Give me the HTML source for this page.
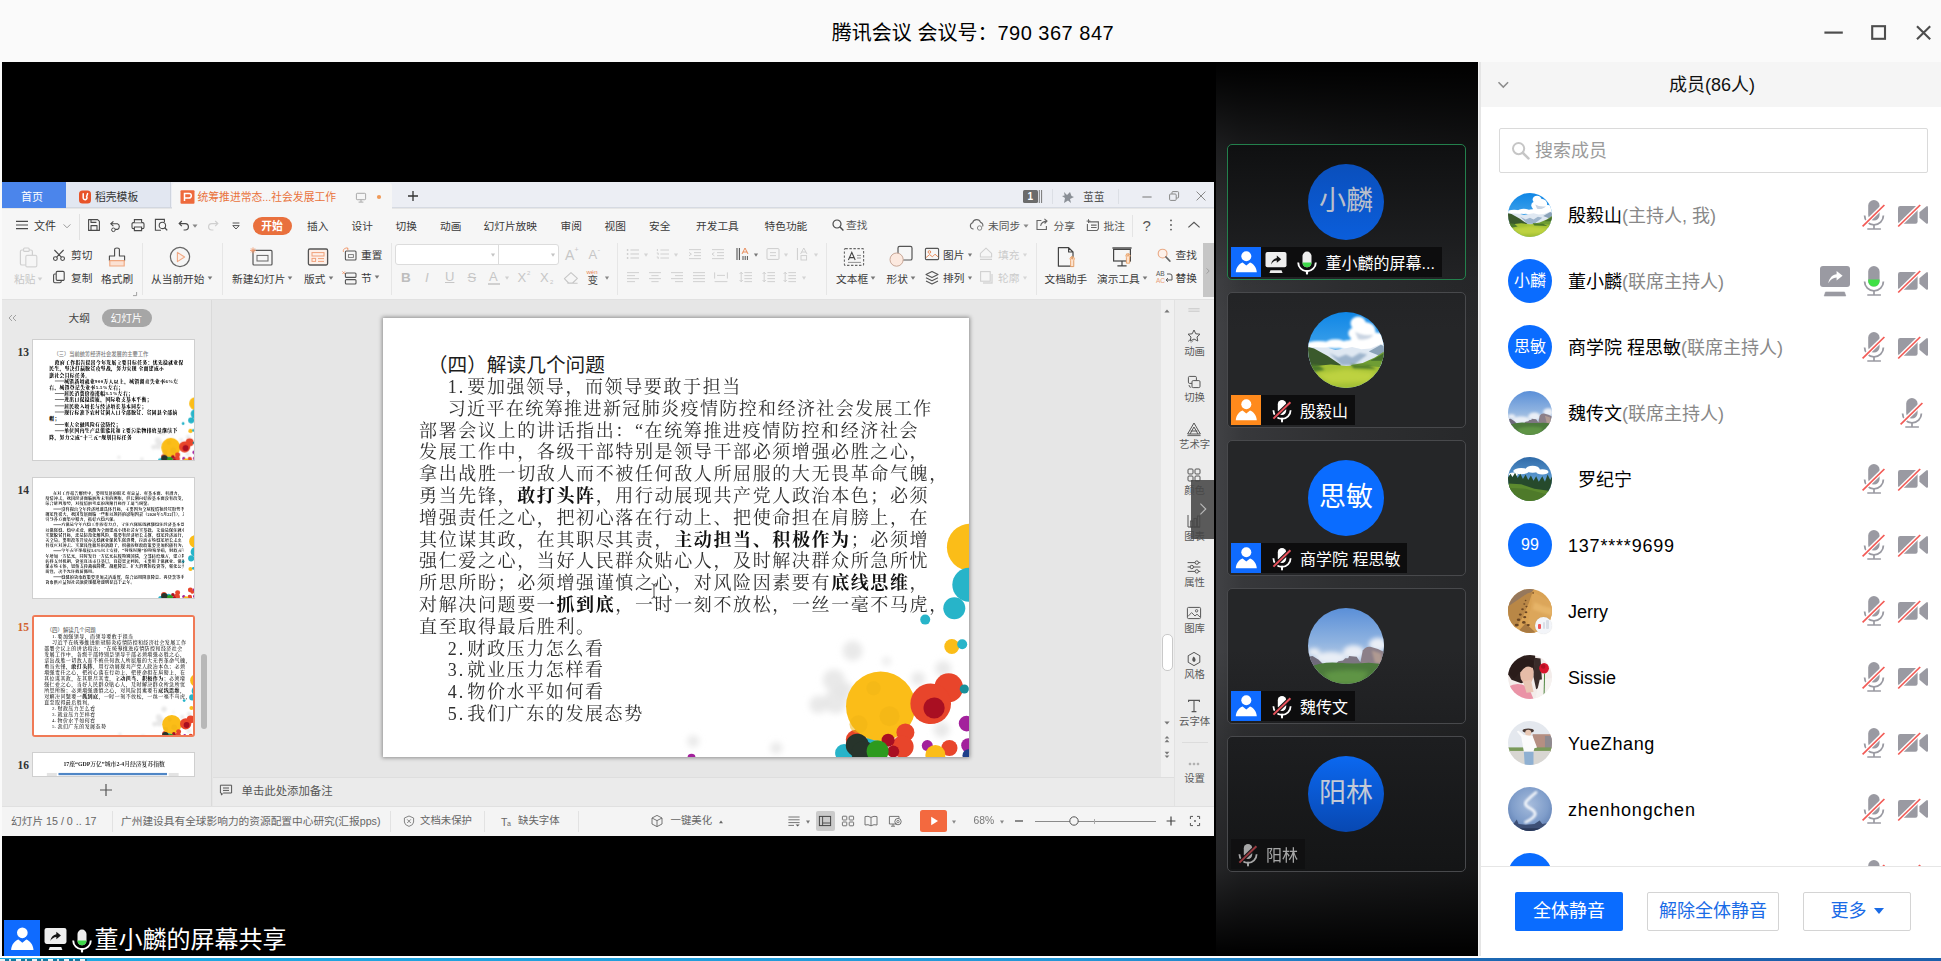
<!DOCTYPE html>
<html lang="zh-CN">
<head>
<meta charset="utf-8">
<title>腾讯会议</title>
<style>
html,body{margin:0;padding:0}
body{width:1941px;height:961px;overflow:hidden;position:relative;background:#fafafa;font-family:"Liberation Sans","Noto Sans CJK SC",sans-serif;color:#000}
div,span,svg{box-sizing:border-box}
.a{position:absolute}
svg{display:block;overflow:visible}
/* ---------- title bar ---------- */
#titlebar{left:0;top:0;width:1941px;height:62px;background:#fafafa}
#title{left:0;top:18px;width:1946px;text-align:center;font-size:20px;line-height:30px;color:#000;white-space:pre}
/* ---------- stage ---------- */
#stage{left:2px;top:62px;width:1476px;height:894px;background:#000}
#bottomline{left:0;top:956px;width:1941px;height:2px;background:#fff}
#bottomblue{left:0;top:958px;width:1941px;height:3px;background:linear-gradient(90deg,#1daae3 0%,#2396d6 55%,#1b62ae 80%,#1b5fab 100%)}
/* ---------- WPS window ---------- */
#wps{left:2px;top:182px;width:1212px;height:654px;background:#e6e6e6;overflow:hidden;font-size:11px;color:#333}
#wpsin{left:0;top:0;width:1212px;height:654px}
/* ---------- video strip ---------- */
#strip{left:1216px;top:62px;width:262px;height:894px;background:linear-gradient(180deg,#000 0,rgba(0,0,0,.8) 40px,rgba(0,0,0,.57) 83px,rgba(0,0,0,.05) 218px,rgba(0,0,0,0) 268px,rgba(0,0,0,0) 588px,rgba(0,0,0,.22) 678px,rgba(0,0,0,.45) 808px,rgba(0,0,0,.85) 870px,#000 894px),linear-gradient(90deg,#414245 0,#37383b 10%,#2e2f31 50%,#27282a 100%)}
/* ---------- member panel ---------- */
#panel{left:1478px;top:62px;width:463px;height:894px;background:#fff}
#slabel{left:2px;top:858px;width:300px;height:36px}
#slabeltxt{left:90.5px;top:0;font-size:24px;line-height:40px;color:#fff;white-space:nowrap}
#bl2{left:0;top:958.5px;width:87px;height:2.5px;background:repeating-linear-gradient(90deg,#e8f4fa 0,#e8f4fa 5px,#14789e 5px,#14789e 9px,#cfe6f0 9px,#cfe6f0 11px,#14789e 11px,#14789e 16px)}
/* ---------- window buttons ---------- */
#winbtn{left:1810px;top:12px}
/* ---------- panel ---------- */
#pborder{left:0;top:0;width:3px;height:894px;background:#e5e5e5;border-left:1px solid #f3f3f3}
#phead{left:3px;top:0;width:460px;height:45px;background:#f5f5f5}
#ptitle{left:0;top:0;width:462px;text-align:center;font-size:18px;line-height:46px;color:#111}
#psearch{left:21px;top:66px;width:429px;height:45px;border:1px solid #dadada;border-radius:2px;background:#fff}
#psph{left:35px;top:0;font-size:18px;line-height:44px;color:#9b9b9b;white-space:nowrap}
#plist{left:3px;top:112px;width:460px;height:692px;overflow:hidden}
.row{left:-3px;width:463px;height:66px}
.av{left:30px;top:11px;width:44px;height:44px;border-radius:50%;overflow:hidden;color:#fff;font-size:16px;line-height:43px;text-align:center;white-space:nowrap}
.av-blue{background:#0a6cff}
.nm{left:90px;top:0;font-size:18px;line-height:68px;color:#000;white-space:nowrap}
.rl{color:#888}
#pfoot{left:3px;top:804px;width:460px;height:90px;background:#fff;border-top:1px solid #e6e6e6}
.btn{top:25px;height:39px;font-size:18px;line-height:37px;text-align:center;border-radius:2px;white-space:nowrap}
.b1{left:34px;width:108px;background:#0a6cff;color:#fff;line-height:39px}
.b2{left:166px;width:132px;border:1px solid #d4d4d4;color:#1a6be6;background:#fff}
.b3{left:322px;width:108px;border:1px solid #d4d4d4;color:#1a6be6;background:#fff}
.tri{display:inline-block;width:0;height:0;border-left:5px solid transparent;border-right:5px solid transparent;border-top:6px solid #1a6be6;margin-left:7px;vertical-align:3px}
/* ---------- strip tiles ---------- */
.tile{left:10.5px;width:239px;height:136px;border:1px solid #48494c;border-radius:5px;background:#222325}
.tile.act{border-color:#23804c}
.tav{left:80.5px;top:19px;width:76px;height:76px;border-radius:50%;overflow:hidden;font-size:27px;line-height:75px;text-align:center;color:#fff;white-space:nowrap}
.t-blue{background:#0a6cff}
.t-blue-d{background:linear-gradient(180deg,#0a4fbc,#0b5edb);color:#b9bfcb}
.t-blue-m{background:linear-gradient(180deg,#0b68f0,#0848b2);color:#c3c9d6}
.lab{left:3px;top:102px;height:30px;background:#0d0d0e;display:flex;align-items:center;padding-right:7px;white-space:nowrap}
.lab .ub{display:block;width:30px;height:30px;flex:none}
.ub-blue{background:#0f6bff}
.ub-orange{background:#ff8a1c}
.lab .li{flex:none;position:relative;top:1px}
.ln{font-size:16px;line-height:30px;color:#fff;position:relative;top:1.6px}
.lab.dim{opacity:.62}
.sig{left:57px;top:38.5px;width:17px;height:17px;border-radius:50%;background:#f3f5f9;box-shadow:0 0 1px rgba(0,0,0,.15)}
.sig i{position:absolute;bottom:4.8px;background:#d9dee7;border-radius:1px}
.sig i:nth-child(1){left:2.6px;width:3.4px}.sig i:nth-child(2){left:7.6px;width:2.6px}.sig i:nth-child(3){left:11.2px;width:2.8px}

/* ---------- WPS ---------- */
#wps .t{line-height:16px;white-space:nowrap}
.slide{background:#fff;overflow:hidden;color:#303030;font-family:"Liberation Serif","Noto Serif CJK SC",serif;font-size:18px}
#mainslide{box-shadow:0 0 4px 1px rgba(0,0,0,.38)}
.sl{white-space:nowrap;letter-spacing:1.62px}
.sl b{font-weight:700;color:#111}
.sl.tight{letter-spacing:1.4px}
.stitle{font-family:"Liberation Sans","Noto Sans CJK SC",sans-serif;font-size:19.7px;line-height:26px;color:#1c1c1c;white-space:nowrap}
.nu{display:inline-block;width:19.6px;letter-spacing:2px}
.dash{display:inline-block;width:2em;height:0;border-top:0.09em solid #111;vertical-align:0.32em}
.th{overflow:hidden;background:#fff}
.th .sl{font-weight:900;color:#000}
.th.t15 .sl{font-weight:500;color:#111}
.th.t15 .sl b{font-weight:900}
.th.t14 .sl{letter-spacing:.7px}
.th .dash{border-top-width:0.16em}
.th .stitle{font-weight:500}
.th.t15 .stitle{font-weight:400;color:#444}
.tno{font:bold 11.5px/14px "Liberation Serif","DejaVu Serif",serif}

</style>
</head>
<body>
<svg width="0" height="0" style="position:absolute">
<defs>
<linearGradient id="g-sky1" x1="0" y1="0" x2="0" y2="1"><stop offset="0" stop-color="#0f86e6"/><stop offset="0.5" stop-color="#3fa2ea"/><stop offset="1" stop-color="#9fd0f2"/></linearGradient>
<linearGradient id="g-sky2" x1="0" y1="0" x2="0" y2="1"><stop offset="0" stop-color="#5a8fd8"/><stop offset="0.45" stop-color="#8fb3e0"/><stop offset="0.75" stop-color="#c3d2e6"/></linearGradient>
<linearGradient id="g-sky3" x1="0" y1="0" x2="0" y2="1"><stop offset="0" stop-color="#2f6aa8"/><stop offset="0.5" stop-color="#5d9bd2"/></linearGradient>
<linearGradient id="g-sand" x1="0" y1="0" x2="1" y2="1"><stop offset="0" stop-color="#b98449"/><stop offset="0.5" stop-color="#dba35c"/><stop offset="1" stop-color="#8a5a2c"/></linearGradient>
<radialGradient id="g-night" cx="0.5" cy="0.4" r="0.75"><stop offset="0" stop-color="#a6bcdc"/><stop offset="0.55" stop-color="#7f9dca"/><stop offset="1" stop-color="#4f6fa6"/></radialGradient>
<filter id="f-b1" x="-20%" y="-20%" width="140%" height="140%"><feGaussianBlur stdDeviation="1.6"/></filter>
<filter id="f-b2" x="-20%" y="-20%" width="140%" height="140%"><feGaussianBlur stdDeviation="3"/></filter>
</defs>
</svg>

<div id="titlebar" class="a">
  <div id="title" class="a">腾讯会议 会议号：<span style="letter-spacing:.5px">790 367 847</span></div>
<svg class="a" id="winbtn" width="131" height="40" viewBox="0 0 131 40"><path d="M14.4 20.6 H32.8" stroke="#4d4d4d" stroke-width="2.2"/><rect x="62.2" y="14.2" width="12.8" height="12.6" fill="none" stroke="#4d4d4d" stroke-width="2.1"/><path d="M107 14.2 L120.2 27.2 M120.2 14.2 L107 27.2" stroke="#4d4d4d" stroke-width="2.1"/></svg>

</div>
<div id="stage" class="a">
  <div class="a" id="slabel">
    <span class="a" style="left:0;top:0;width:36px;height:36px;background:#0f6bff"><svg class="a" style="left:2px;top:2.5px" width="32" height="32" viewBox="0 0 30 30"><circle cx="15.3" cy="9.2" r="5" fill="#fff"/><path d="M4.8 25.2 C5.2 20 8.2 16.6 11.6 15.4 L15.3 18.4 L19 15.4 C22.4 16.6 25.4 20 25.8 25.2 Z" fill="#fff"/></svg></span>
    <svg class="a" style="left:39.5px;top:8px" width="23" height="23" viewBox="0 0 22 22"><rect x="0.5" y="0" width="21" height="15.2" rx="2" fill="#eee"/><path d="M5.5 18.2 H16.5 L17.6 21 H4.4 Z" fill="#eee"/><path d="M6 12.4 C6.8 8.6 9 6.4 11.8 6 V3.6 L16.2 7.2 L11.8 10.8 V8.6 C9.4 8.8 7.6 10 6 12.4 Z" fill="#151515"/></svg>
    <svg class="a" style="left:65.5px;top:8px" width="24" height="26" viewBox="0 0 24 26"><rect x="7.5" y="1.6" width="9" height="15.6" rx="4.5" fill="#eee"/><path d="M7.5 12.6 H16.5 V12.7 A4.5 4.5 0 0 1 7.5 12.7 Z" fill="#3fd84a"/><path d="M3.2 12.4 A8.8 8.8 0 0 0 20.8 12.4" fill="none" stroke="#fff" stroke-width="1.9"/><path d="M12 21 V23.6" stroke="#fff" stroke-width="2.2" stroke-linecap="round"/></svg>
    <span class="a" id="slabeltxt">董小麟的屏幕共享</span>
  </div>
</div>
<div id="wps" class="a"><div id="wpsin" class="a">
<div class="a " style="left:0px;top:0px;width:1212px;height:26px;background:#eceef4;border-bottom:1px solid #d6dae2"></div>
<div class="a " style="left:0px;top:0px;width:64px;height:26px;background:#4b85eb"></div>
<div class="a t " style="left:19px;top:6.5px;font-size:11px;color:#fff;">首页</div>
<div class="a " style="left:64px;top:0px;width:105px;height:26px;background:#e2e7f1;border-right:1px solid #cfd4de;border-bottom:1px solid #d2d7e0"></div>
<svg class="a" style="left:76.0px;top:7.5px;" width="14" height="14" viewBox="-7.0 -7.0 14 14"><rect x="-6" y="-6.5" width="12" height="13" rx="3.5" fill="#e8542a"/><path d="M-1.8 -3.2 V1 A1.9 1.9 0 1 0 1.6 -0.4 L2.6 -3.4" fill="none" stroke="#fff" stroke-width="1.5" stroke-linecap="round"/></svg>
<div class="a t " style="left:93px;top:7.0px;font-size:10.8px;color:#333;">稻壳模板</div>
<div class="a " style="left:170px;top:1px;width:220px;height:26px;background:#f6f6f6;border-radius:3px 3px 0 0"></div>
<svg class="a" style="left:177.5px;top:7.7px;" width="15" height="14" viewBox="-7.5 -7.0 15 14"><rect x="-7" y="-6.8" width="14" height="13.6" rx="1" fill="#ee6a3c"/><path d="M-3 4 V-3.4 H1.6 A2 2 0 0 1 1.6 1 H-3" fill="none" stroke="#fff" stroke-width="1.5"/></svg>
<div class="a t " style="left:195.5px;top:7.0px;font-size:10.8px;color:#e9733c;">统筹推进常态...社会发展工作</div>
<svg class="a" style="left:352.5px;top:9.5px;" width="12" height="11" viewBox="-6.0 -5.5 12 11"><rect x="-4.6" y="-4.2" width="9.2" height="6.4" rx="0.8" fill="none" stroke="#a9a9a9" stroke-width="1"/><path d="M0 2.2 V4.4 M-2.4 4.6 H2.4" stroke="#a9a9a9" stroke-width="1"/></svg>
<svg class="a" style="left:374.0px;top:11.8px;" width="6" height="6" viewBox="-3.0 -3.0 6 6"><circle r="2.1" fill="#f09a58"/></svg>
<svg class="a" style="left:405.3px;top:8.3px;" width="12" height="12" viewBox="-6.0 -6.0 12 12"><path d="M-5 0 H5 M0 -5 V5" stroke="#333" stroke-width="1.3"/></svg>
<div class="a " style="left:1021px;top:7.7px;width:14.5px;height:13.1px;background:#6b6b6b;border-radius:1.5px;color:#fff;font-size:10px;line-height:13px;text-align:center;font-weight:bold">1</div>
<svg class="a" style="left:1036px;top:7.7px;" width="6" height="14"><path d="M1.3 0 V13 M3.6 0 V13" stroke="#777" stroke-width="1"/></svg>
<div class="a " style="left:1049.5px;top:7px;width:1.0px;height:15px;background:#dcdfe5"></div>
<svg class="a" style="left:1058.5px;top:7.5px;" width="14" height="14" viewBox="-7.0 -7.0 14 14"><path d="M-4 -5 L-1 -2 L2 -5 L3.5 -1 L6 0 L2 2 L3 6 L0 3.6 L-4 6 L-3 1 L-6 -1 L-3.4 -1.6 Z" fill="#8a8f96"/></svg>
<div class="a t " style="left:1081px;top:7.0px;font-size:10.8px;color:#555;">茧茧</div>
<div class="a " style="left:1116px;top:7px;width:1px;height:15px;background:#dcdfe5"></div>
<svg class="a" style="left:1139.0px;top:13.0px;" width="12" height="4" viewBox="-6.0 -2.0 12 4"><path d="M-4.6 0 H4.6" stroke="#777" stroke-width="1"/></svg>
<svg class="a" style="left:1166.0px;top:7.5px;" width="12" height="12" viewBox="-6.0 -6.0 12 12"><rect x="-4.4" y="-2" width="6.6" height="6.4" rx="1" fill="none" stroke="#888" stroke-width="1"/><path d="M-2 -2.2 V-3.6 Q-2 -4.4 -1 -4.4 H3.6 Q4.6 -4.4 4.6 -3.4 V1 Q4.6 2 3.6 2 H2.4" fill="none" stroke="#888" stroke-width="1"/></svg>
<svg class="a" style="left:1193.0px;top:7.5px;" width="12" height="12" viewBox="-6.0 -6.0 12 12"><path d="M-4.4 -4.4 L4.4 4.4 M4.4 -4.4 L-4.4 4.4" stroke="#888" stroke-width="1"/></svg>
<div class="a " style="left:0px;top:27px;width:1212px;height:89.5px;background:#f6f6f6"></div>
<div class="a " style="left:0px;top:116.5px;width:1212px;height:2.5px;background:linear-gradient(180deg,#dedede,#ebebeb)"></div>
<svg class="a" style="left:13.3px;top:37.0px;" width="14" height="12" viewBox="-7.0 -6.0 14 12"><path d="M-6 -3.6 H6 M-6 0 H6 M-6 3.6 H6" stroke="#4a4a4a" stroke-width="1.1"/></svg>
<div class="a t " style="left:32px;top:35.5px;font-size:11px;color:#333;">文件</div>
<svg class="a" style="left:59.5px;top:40.0px;" width="10" height="8" viewBox="-5.0 -4.0 10 8"><path d="M-3.4 -1.6 L0 1.8 L3.4 -1.6" fill="none" stroke="#999" stroke-width="1"/></svg>
<div class="a " style="left:76.5px;top:32px;width:1.0px;height:26px;background:#e1e1e1"></div>
<svg class="a" style="left:85.0px;top:36.0px;" width="14" height="14" viewBox="-7.0 -7.0 14 14"><path d="M-5.4 -5.4 H3.6 L5.4 -3.6 V5.4 H-5.4 Z M-3 5 V0.6 H3 V5 M-3 -5.2 V-2.6 H2.4" fill="none" stroke="#4a4a4a" stroke-width="1.1" stroke-linejoin="round"/></svg>
<svg class="a" style="left:106.0px;top:36.5px;" width="16" height="14" viewBox="-8.0 -7.0 16 14"><path d="M-5 -2.2 H1.4 A3 3 0 0 1 1.4 3.4 H-1 M-2.6 -4.6 L-5.2 -2.2 L-2.6 0.2" fill="none" stroke="#4a4a4a" stroke-width="1.1"/><circle cx="-2.6" cy="3.8" r="1.8" fill="none" stroke="#4a4a4a" stroke-width="1"/></svg>
<svg class="a" style="left:128.0px;top:36.0px;" width="16" height="14" viewBox="-8.0 -7.0 16 14"><rect x="-6" y="-2.4" width="12" height="6" rx="1.4" fill="none" stroke="#4a4a4a" stroke-width="1.1"/><path d="M-3.6 -2.6 V-5.4 H3.6 V-2.6 M-3.6 2 H3.6 V5.6 H-3.6 Z" fill="#f6f6f6" stroke="#4a4a4a" stroke-width="1.1"/></svg>
<svg class="a" style="left:150.5px;top:36.0px;" width="16" height="14" viewBox="-8.0 -7.0 16 14"><path d="M0 5.2 H-5.6 V-5.6 H3.4 V-3" fill="none" stroke="#4a4a4a" stroke-width="1.1"/><circle cx="1.4" cy="0.4" r="3.2" fill="none" stroke="#4a4a4a" stroke-width="1.1"/><path d="M3.8 2.8 L6.2 5.4" stroke="#4a4a4a" stroke-width="1.3"/></svg>
<svg class="a" style="left:174.5px;top:37.3px;" width="14" height="12" viewBox="-7.0 -6.0 14 12"><path d="M-4.6 -1.4 H1.2 A3.2 3.2 0 0 1 1.2 5 H-0.4 M-2.2 -4 L-4.8 -1.4 L-2.2 1.2" fill="none" stroke="#4a4a4a" stroke-width="1.2"/></svg>
<svg class="a" style="left:189.0px;top:41.0px;" width="8" height="6" viewBox="-4.0 -3.0 8 6"><path d="M-2.5 -1.4 L2.5 -1.4 L0 1.7 Z" fill="#888"/></svg>
<svg class="a" style="left:203.5px;top:37.3px;" width="14" height="12" viewBox="-7.0 -6.0 14 12"><path d="M4.6 -1.4 H-1.2 A3.2 3.2 0 0 0 -1.2 5 H0.4 M2.2 -4 L4.8 -1.4 L2.2 1.2" fill="none" stroke="#cfcfcf" stroke-width="1.2"/></svg>
<svg class="a" style="left:228.5px;top:38.5px;" width="10" height="10" viewBox="-5.0 -5.0 10 10"><path d="M-3.4 -3 H3.4" stroke="#555" stroke-width="1"/><path d="M-3.2 -0.4 L0 3 L3.2 -0.4 Z" fill="none" stroke="#555" stroke-width="1"/></svg>
<div class="a " style="left:250.5px;top:34.5px;width:39.0px;height:18.0px;background:#e9703d;border-radius:9px;color:#fff;font-size:10.8px;line-height:18px;text-align:center;font-weight:bold">开始</div>
<div class="a t " style="left:305px;top:35.5px;font-size:10.7px;color:#3a3a3a;">插入</div>
<div class="a t " style="left:349.5px;top:35.5px;font-size:10.7px;color:#3a3a3a;">设计</div>
<div class="a t " style="left:393.5px;top:35.5px;font-size:10.7px;color:#3a3a3a;">切换</div>
<div class="a t " style="left:438px;top:35.5px;font-size:10.7px;color:#3a3a3a;">动画</div>
<div class="a t " style="left:481.5px;top:35.5px;font-size:10.7px;color:#3a3a3a;">幻灯片放映</div>
<div class="a t " style="left:558.5px;top:35.5px;font-size:10.7px;color:#3a3a3a;">审阅</div>
<div class="a t " style="left:602.5px;top:35.5px;font-size:10.7px;color:#3a3a3a;">视图</div>
<div class="a t " style="left:647px;top:35.5px;font-size:10.7px;color:#3a3a3a;">安全</div>
<div class="a t " style="left:694px;top:35.5px;font-size:10.7px;color:#3a3a3a;">开发工具</div>
<div class="a t " style="left:762.5px;top:35.5px;font-size:10.7px;color:#3a3a3a;">特色功能</div>
<svg class="a" style="left:829.0px;top:36.0px;" width="14" height="14" viewBox="-7.0 -7.0 14 14"><circle cx="-1" cy="-1" r="4" fill="none" stroke="#4a4a4a" stroke-width="1.2"/><path d="M2 2 L5.4 5.6" stroke="#4a4a4a" stroke-width="1.4"/></svg>
<div class="a t " style="left:844px;top:35.0px;font-size:10.7px;color:#555;">查找</div>
<svg class="a" style="left:967.0px;top:37.0px;" width="16" height="12" viewBox="-8.0 -6.0 16 12"><path d="M-3.4 4 H-4 A3.2 3.2 0 0 1 -4.4 -2.2 A4.2 4.2 0 0 1 3.6 -2.6 A3 3 0 0 1 5.6 1.6" fill="none" stroke="#666" stroke-width="1.1"/><circle cx="2.6" cy="3" r="2.2" fill="none" stroke="#888" stroke-width="1"/></svg>
<div class="a t " style="left:986px;top:35.5px;font-size:10.7px;color:#555;">未同步</div>
<svg class="a" style="left:1019.5px;top:41.0px;" width="8" height="6" viewBox="-4.0 -3.0 8 6"><path d="M-2.5 -1.4 L2.5 -1.4 L0 1.7 Z" fill="#888"/></svg>
<svg class="a" style="left:1033.0px;top:36.0px;" width="14" height="13" viewBox="-7.0 -6.5 14 13"><path d="M-0.6 -4 H-5 V5 H4.4 V1.6" fill="none" stroke="#666" stroke-width="1.1"/><path d="M-1.4 1.4 Q-0.6 -3 4.8 -3.4 M2.4 -5.6 L5 -3.4 L2.6 -1" fill="none" stroke="#666" stroke-width="1.1"/></svg>
<div class="a t " style="left:1051.5px;top:35.5px;font-size:10.7px;color:#555;">分享</div>
<svg class="a" style="left:1083.0px;top:36.5px;" width="16" height="13" viewBox="-8.0 -6.5 16 13"><path d="M-4 -3.6 H5.4 V3.4 L4 5 H-5.6 V-1.6 M-2 -0.4 H3.6 M-2 2 H3.6" fill="none" stroke="#666" stroke-width="1.1"/><path d="M-6.4 -4.4 H-2.6 M-4.5 -6.3 V-2.5" stroke="#666" stroke-width="1"/></svg>
<div class="a t " style="left:1101.5px;top:35.5px;font-size:10.7px;color:#555;">批注</div>
<div class="a " style="left:1129.5px;top:33px;width:1.0px;height:22px;background:#e4e4e4"></div>
<div class="a t " style="left:1140.5px;top:35.5px;font-size:15px;color:#555;font-family:'Liberation Sans',sans-serif">?</div>
<svg class="a" style="left:1167.0px;top:36.0px;" width="4" height="14" viewBox="-2.0 -7.0 4 14"><circle cy="-4.6" r="0.9" fill="#555"/><circle cy="0" r="0.9" fill="#555"/><circle cy="4.6" r="0.9" fill="#555"/></svg>
<svg class="a" style="left:1185.0px;top:39.0px;" width="14" height="8" viewBox="-7.0 -4.0 14 8"><path d="M-5.6 2.4 L0 -2.8 L5.6 2.4" fill="none" stroke="#555" stroke-width="1.2"/></svg>
<svg class="a" style="left:14.5px;top:63.8px;" width="22" height="22" viewBox="-11.0 -11.0 22 22"><rect x="-7.6" y="-7" width="12" height="15" rx="1.6" fill="none" stroke="#cfcfcf" stroke-width="1.2"/><rect x="-4.4" y="-9" width="5.6" height="3.4" rx="1" fill="#f6f6f6" stroke="#cfcfcf" stroke-width="1.1"/><rect x="-2.2" y="-1.6" width="11" height="11.4" rx="1.4" fill="#f6f6f6" stroke="#d4d4d4" stroke-width="1.2"/></svg>
<div class="a t " style="left:12px;top:88.5px;font-size:10.7px;color:#c6c6c6;">粘贴</div>
<svg class="a" style="left:33.8px;top:94.0px;" width="8" height="6" viewBox="-4.0 -3.0 8 6"><path d="M-2.3 -1.4 L2.3 -1.4 L0 1.7 Z" fill="#cfcfcf"/></svg>
<svg class="a" style="left:50.0px;top:65.7px;" width="14" height="14" viewBox="-7.0 -7.0 14 14"><path d="M-4.6 -5 L2.4 2.2 M4.6 -5 L-2.4 2.2" stroke="#4a4a4a" stroke-width="1.1"/><circle cx="-3.6" cy="3.6" r="1.9" fill="none" stroke="#4a4a4a" stroke-width="1.1"/><circle cx="3.6" cy="3.6" r="1.9" fill="none" stroke="#4a4a4a" stroke-width="1.1"/></svg>
<div class="a t " style="left:69px;top:64.7px;font-size:10.7px;color:#3a3a3a;">剪切</div>
<svg class="a" style="left:50.0px;top:88.3px;" width="14" height="14" viewBox="-7.0 -7.0 14 14"><rect x="-2.8" y="-5.6" width="8" height="9" rx="1.2" fill="none" stroke="#4a4a4a" stroke-width="1.1"/><path d="M-3.2 -3 H-4.2 Q-5.4 -3 -5.4 -1.8 V4.6 Q-5.4 5.8 -4.2 5.8 H1 Q2.2 5.8 2.2 4.6 V3.8" fill="none" stroke="#4a4a4a" stroke-width="1.1"/></svg>
<div class="a t " style="left:69px;top:87.5px;font-size:10.7px;color:#3a3a3a;">复制</div>
<svg class="a" style="left:103.7px;top:63.6px;" width="22" height="22" viewBox="-11.0 -11.0 22 22"><path d="M-2.4 -1 V-7.4 Q-2.4 -9 0 -9 Q2.4 -9 2.4 -7.4 V-1 H7.6 V3.6 H-7.6 V-1 Z" fill="#f6f6f6" stroke="#4a4a4a" stroke-width="1.1" stroke-linejoin="round"/><path d="M-7.2 3.6 H7.2 V9 H-7.2 Z" fill="#fbe1d3" stroke="#f0a77f" stroke-width="1.1"/></svg>
<div class="a t " style="left:99px;top:89.0px;font-size:10.7px;color:#3a3a3a;">格式刷</div>
<svg class="a" style="left:130.0px;top:108.5px;" width="6" height="6" viewBox="-3.0 -3.0 6 6"><path d="M-2 1.6 H1.6 V-2" fill="none" stroke="#999" stroke-width="0.9"/></svg>
<div class="a " style="left:139.5px;top:61px;width:1.0px;height:52px;background:#e6e6e6"></div>
<svg class="a" style="left:166.0px;top:63.0px;" width="24" height="24" viewBox="-12.0 -12.0 24 24"><circle r="9.6" fill="none" stroke="#666" stroke-width="1.2"/><path d="M-2.6 -4.6 L4.6 0 L-2.6 4.6 Z" fill="#fdeee6" stroke="#f0a985" stroke-width="1.1" stroke-linejoin="round"/></svg>
<div class="a t " style="left:149px;top:89.0px;font-size:10.7px;color:#3a3a3a;">从当前开始</div>
<svg class="a" style="left:203.5px;top:93.0px;" width="8" height="6" viewBox="-4.0 -3.0 8 6"><path d="M-2.3 -1.4 L2.3 -1.4 L0 1.7 Z" fill="#777"/></svg>
<div class="a " style="left:220px;top:61px;width:1px;height:52px;background:#e6e6e6"></div>
<svg class="a" style="left:247.0px;top:64.0px;" width="26" height="22" viewBox="-13.0 -11.0 26 22"><rect x="-9" y="-6.6" width="19" height="14.6" rx="1" fill="none" stroke="#555" stroke-width="1.2"/><rect x="-5" y="-1.6" width="11" height="5.6" fill="none" stroke="#666" stroke-width="1"/><path d="M-9 -9.6 V-3.6 M-12 -6.6 H-6 M-11 -8.6 L-7 -4.6 M-7 -8.6 L-11 -4.6" stroke="#f09a6e" stroke-width="0.9"/></svg>
<div class="a t " style="left:230px;top:89.0px;font-size:10.7px;color:#3a3a3a;">新建幻灯片</div>
<svg class="a" style="left:284.0px;top:93.0px;" width="8" height="6" viewBox="-4.0 -3.0 8 6"><path d="M-2.3 -1.4 L2.3 -1.4 L0 1.7 Z" fill="#777"/></svg>
<svg class="a" style="left:303.5px;top:64.0px;" width="24" height="22" viewBox="-12.0 -11.0 24 22"><rect x="-9.6" y="-8" width="19.2" height="16" rx="1.4" fill="#fdf0e9" stroke="#555" stroke-width="1.3"/><rect x="-6" y="-4.4" width="12" height="3.4" fill="none" stroke="#f0a07a" stroke-width="1"/><rect x="-6" y="1.4" width="3.6" height="3" fill="none" stroke="#f0a07a" stroke-width="1"/><path d="M0 1.6 H6 M0 4.4 H6" stroke="#f0a07a" stroke-width="1"/></svg>
<div class="a t " style="left:302px;top:89.0px;font-size:10.7px;color:#3a3a3a;">版式</div>
<svg class="a" style="left:324.5px;top:93.0px;" width="8" height="6" viewBox="-4.0 -3.0 8 6"><path d="M-2.3 -1.4 L2.3 -1.4 L0 1.7 Z" fill="#777"/></svg>
<svg class="a" style="left:339.7px;top:65.5px;" width="16" height="14" viewBox="-8.0 -7.0 16 14"><rect x="-4.6" y="-4" width="10.6" height="9" rx="1" fill="none" stroke="#555" stroke-width="1.1"/><rect x="-1.6" y="-0.4" width="5" height="2.8" fill="none" stroke="#777" stroke-width="0.9"/><path d="M-6.6 -3 A3 3 0 0 1 -2 -6.4 M-3.2 -7.4 L-1.6 -6.2 L-3 -4.6" fill="none" stroke="#f09a6e" stroke-width="0.9"/></svg>
<div class="a t " style="left:359px;top:64.7px;font-size:10.7px;color:#3a3a3a;">重置</div>
<svg class="a" style="left:339.7px;top:88.5px;" width="16" height="14" viewBox="-8.0 -7.0 16 14"><rect x="-4.6" y="-5" width="10.6" height="4.4" rx="1" fill="none" stroke="#555" stroke-width="1.1"/><rect x="-4.6" y="1.6" width="10.6" height="4.4" rx="1" fill="none" stroke="#555" stroke-width="1.1"/><path d="M-7.6 -6.6 L-5 -4 M-5 -6.6 L-7.6 -4" stroke="#f09a6e" stroke-width="0.9"/></svg>
<div class="a t " style="left:359px;top:87.5px;font-size:10.7px;color:#3a3a3a;">节</div>
<svg class="a" style="left:371.0px;top:92.0px;" width="8" height="6" viewBox="-4.0 -3.0 8 6"><path d="M-2.3 -1.4 L2.3 -1.4 L0 1.7 Z" fill="#777"/></svg>
<div class="a " style="left:389px;top:61px;width:1px;height:52px;background:#e6e6e6"></div>
<div class="a " style="left:393px;top:62px;width:163.5px;height:20.5px;background:#fff;border:1px solid #dcdcdc;border-radius:3px"></div>
<div class="a " style="left:495.5px;top:62.5px;width:1.0px;height:19.5px;background:#dcdcdc"></div>
<svg class="a" style="left:486.5px;top:69.7px;" width="8" height="6" viewBox="-4.0 -3.0 8 6"><path d="M-2.1 -1.4 L2.1 -1.4 L0 1.7 Z" fill="#c4c4c4"/></svg>
<svg class="a" style="left:547.0px;top:69.7px;" width="8" height="6" viewBox="-4.0 -3.0 8 6"><path d="M-2.1 -1.4 L2.1 -1.4 L0 1.7 Z" fill="#c4c4c4"/></svg>
<div class="a t " style="left:563px;top:64.5px;font-size:14px;color:#c6c6c6;font-family:'Liberation Sans',sans-serif">A</div>
<div class="a t " style="left:572.5px;top:60.0px;font-size:7px;color:#c6c6c6;font-family:'Liberation Sans',sans-serif">+</div>
<div class="a t " style="left:586.5px;top:64.5px;font-size:13px;color:#c6c6c6;font-family:'Liberation Sans',sans-serif">A</div>
<div class="a t " style="left:595.5px;top:59.5px;font-size:8px;color:#c6c6c6;font-family:'Liberation Sans',sans-serif">-</div>
<div class="a t " style="left:399px;top:87.5px;font-size:13.5px;color:#bdbdbd;font-family:'Liberation Sans',sans-serif;font-weight:bold">B</div>
<div class="a t " style="left:423px;top:87.5px;font-size:13.5px;color:#c6c6c6;font-family:'Liberation Sans',sans-serif;font-style:italic">I</div>
<div class="a t " style="left:443px;top:87.2px;font-size:13px;color:#c6c6c6;font-family:'Liberation Sans',sans-serif;text-decoration:underline">U</div>
<div class="a t " style="left:465.5px;top:87.5px;font-size:13px;color:#c6c6c6;font-family:'Liberation Sans',sans-serif;text-decoration:line-through">S</div>
<div class="a t " style="left:487px;top:86.8px;font-size:13px;color:#c6c6c6;font-family:'Liberation Sans',sans-serif;">A</div>
<div class="a " style="left:485.5px;top:101.2px;width:12.0px;height:1.8px;background:#d0d0d0"></div>
<svg class="a" style="left:501.0px;top:93.0px;" width="8" height="6" viewBox="-4.0 -3.0 8 6"><path d="M-2.1 -1.4 L2.1 -1.4 L0 1.7 Z" fill="#d0d0d0"/></svg>
<div class="a t " style="left:515.5px;top:87.8px;font-size:13px;color:#c6c6c6;font-family:'Liberation Sans',sans-serif;">X</div>
<div class="a t " style="left:525px;top:83.0px;font-size:6px;color:#c6c6c6;font-family:'Liberation Sans',sans-serif;">2</div>
<div class="a t " style="left:538px;top:87.8px;font-size:13px;color:#c6c6c6;font-family:'Liberation Sans',sans-serif;">X</div>
<div class="a t " style="left:548px;top:92.0px;font-size:6px;color:#c6c6c6;font-family:'Liberation Sans',sans-serif;">2</div>
<svg class="a" style="left:561.0px;top:88.5px;" width="16" height="14" viewBox="-8.0 -7.0 16 14"><path d="M-6.6 0.6 L0 -5.4 L6.4 0.4 L1.6 5 H-2.4 Z M-3.6 5.2 H6.6" fill="none" stroke="#c6c6c6" stroke-width="1.1" stroke-linejoin="round"/></svg>
<div class="a t " style="left:585.5px;top:89.5px;font-size:10.5px;color:#4a4a4a;">变</div>
<div class="a t " style="left:584.5px;top:82.0px;font-size:6px;color:#e8834f;font-family:'Liberation Sans',sans-serif;">wén</div>
<svg class="a" style="left:600.5px;top:93.0px;" width="8" height="6" viewBox="-4.0 -3.0 8 6"><path d="M-2.1 -1.4 L2.1 -1.4 L0 1.7 Z" fill="#888"/></svg>
<div class="a " style="left:615px;top:61px;width:1px;height:52px;background:#e6e6e6"></div>
<svg class="a" style="left:622.5px;top:65.3px;" width="16" height="14" viewBox="-8.0 -7.0 16 14"><path d="M-2.6 -4 H6 M-2.6 0 H6 M-2.6 4 H6" stroke="#cdcdcd" stroke-width="1"/><circle cx="-5.4" cy="-4" r="0.9" fill="#cdcdcd"/><circle cx="-5.4" cy="0" r="0.9" fill="#cdcdcd"/><circle cx="-5.4" cy="4" r="0.9" fill="#cdcdcd"/></svg>
<svg class="a" style="left:652.5px;top:65.3px;" width="16" height="14" viewBox="-8.0 -7.0 16 14"><path d="M-2.6 -4 H6 M-2.6 0 H6 M-2.6 4 H6 M-5.6 -5 V-3 M-6.2 -1 H-4.8 V1 M-6.2 3 H-4.8 V5" stroke="#cdcdcd" stroke-width="0.9" fill="none"/></svg>
<svg class="a" style="left:685.0px;top:65.3px;" width="16" height="14" viewBox="-8.0 -7.0 16 14"><path d="M-6 -4.4 H6 M-1 -1.4 H6 M-1 1.6 H6 M-6 4.6 H6 M-6 -1.6 L-3.6 0.1 L-6 1.8" stroke="#cdcdcd" stroke-width="0.9" fill="none"/></svg>
<svg class="a" style="left:708.0px;top:65.3px;" width="16" height="14" viewBox="-8.0 -7.0 16 14"><path d="M-6 -4.4 H6 M-1 -1.4 H6 M-1 1.6 H6 M-6 4.6 H6 M-3.6 -1.6 L-6 0.1 L-3.6 1.8" stroke="#cdcdcd" stroke-width="0.9" fill="none"/></svg>
<svg class="a" style="left:732.5px;top:65.3px;" width="16" height="14" viewBox="-8.0 -7.0 16 14"><path d="M-6 -6 V6 M-3.6 -6 V6" stroke="#555" stroke-width="1.1"/><path d="M-1 0 L2 -6 L5 0 M-0.2 -2 H4.2" fill="none" stroke="#e8834f" stroke-width="0.9"/><path d="M0 2 V6 M2.2 2 V6 M4.4 2 V6" stroke="#555" stroke-width="1"/></svg>
<svg class="a" style="left:762.5px;top:65.3px;" width="16" height="14" viewBox="-8.0 -7.0 16 14"><rect x="-6" y="-5.4" width="12" height="10.8" rx="1" fill="none" stroke="#cdcdcd" stroke-width="1"/><path d="M-3 -1.4 H3 M-3 1.6 H3" stroke="#cdcdcd" stroke-width="0.9"/></svg>
<svg class="a" style="left:792.5px;top:65.3px;" width="16" height="14" viewBox="-8.0 -7.0 16 14"><path d="M-5.6 -6 V6" stroke="#cdcdcd" stroke-width="1"/><path d="M-2.4 0 L0.8 -6 L4 0 M-1.4 -2 H3" fill="none" stroke="#cdcdcd" stroke-width="0.9"/><rect x="-2" y="1.6" width="5.6" height="4.4" fill="none" stroke="#cdcdcd" stroke-width="0.9"/></svg>
<svg class="a" style="left:640.0px;top:70.0px;" width="8" height="6" viewBox="-4.0 -3.0 8 6"><path d="M-2.1 -1.4 L2.1 -1.4 L0 1.7 Z" fill="#d4d4d4"/></svg>
<svg class="a" style="left:670.0px;top:70.0px;" width="8" height="6" viewBox="-4.0 -3.0 8 6"><path d="M-2.1 -1.4 L2.1 -1.4 L0 1.7 Z" fill="#d4d4d4"/></svg>
<svg class="a" style="left:749.5px;top:70.0px;" width="8" height="6" viewBox="-4.0 -3.0 8 6"><path d="M-2.1 -1.4 L2.1 -1.4 L0 1.7 Z" fill="#777"/></svg>
<svg class="a" style="left:780.0px;top:70.0px;" width="8" height="6" viewBox="-4.0 -3.0 8 6"><path d="M-2.1 -1.4 L2.1 -1.4 L0 1.7 Z" fill="#d4d4d4"/></svg>
<svg class="a" style="left:810.0px;top:70.0px;" width="8" height="6" viewBox="-4.0 -3.0 8 6"><path d="M-2.1 -1.4 L2.1 -1.4 L0 1.7 Z" fill="#d4d4d4"/></svg>
<svg class="a" style="left:622.5px;top:88.3px;" width="16" height="14" viewBox="-8.0 -7.0 16 14"><path d="M-6 -4.4 H6 M-6 -1.4 H2 M-6 1.6 H6 M-6 4.6 H2" stroke="#cdcdcd" stroke-width="0.9"/></svg>
<svg class="a" style="left:645.0px;top:88.3px;" width="16" height="14" viewBox="-8.0 -7.0 16 14"><path d="M-6 -4.4 H6 M-3.6 -1.4 H3.6 M-6 1.6 H6 M-3.6 4.6 H3.6" stroke="#cdcdcd" stroke-width="0.9"/></svg>
<svg class="a" style="left:667.0px;top:88.3px;" width="16" height="14" viewBox="-8.0 -7.0 16 14"><path d="M-6 -4.4 H6 M-2 -1.4 H6 M-6 1.6 H6 M-2 4.6 H6" stroke="#cdcdcd" stroke-width="0.9"/></svg>
<svg class="a" style="left:689.0px;top:88.3px;" width="16" height="14" viewBox="-8.0 -7.0 16 14"><path d="M-6 -4.4 H6 M-6 -1.4 H6 M-6 1.6 H6 M-6 4.6 H6" stroke="#cdcdcd" stroke-width="0.9"/></svg>
<svg class="a" style="left:711.0px;top:88.3px;" width="16" height="14" viewBox="-8.0 -7.0 16 14"><path d="M-6.4 -4.6 V1.6 M6.4 -4.6 V1.6 M-4 -1.6 H4 M-6.4 4.6 H6.4" stroke="#cdcdcd" stroke-width="0.9"/></svg>
<svg class="a" style="left:736.0px;top:88.3px;" width="16" height="14" viewBox="-8.0 -7.0 16 14"><path d="M-1.6 -4.4 H6 M-1.6 -1.4 H6 M-1.6 1.6 H6 M-1.6 4.6 H6 M-4.8 -4.6 V4.6 M-6.4 -3 L-4.8 -4.8 L-3.2 -3 M-6.4 3 L-4.8 4.8 L-3.2 3" stroke="#cdcdcd" stroke-width="0.9" fill="none"/></svg>
<svg class="a" style="left:758.7px;top:88.3px;" width="16" height="14" viewBox="-8.0 -7.0 16 14"><path d="M-1.6 -4.4 H6 M-1.6 -1.4 H6 M-1.6 1.6 H6 M-1.6 4.6 H6 M-4.8 -4.6 V4.6 M-6.4 -3 L-4.8 -4.8 L-3.2 -3 M-6.4 3 L-4.8 4.8 L-3.2 3" stroke="#cdcdcd" stroke-width="0.9" fill="none"/></svg>
<svg class="a" style="left:780.0px;top:88.3px;" width="16" height="14" viewBox="-8.0 -7.0 16 14"><path d="M-1.6 -4.4 H6 M-1.6 -1.4 H6 M-1.6 1.6 H6 M-1.6 4.6 H6 M-4.8 -4.6 V4.6 M-6.4 -3 L-4.8 -4.8 L-3.2 -3 M-6.4 3 L-4.8 4.8 L-3.2 3" stroke="#cdcdcd" stroke-width="0.9" fill="none"/></svg>
<svg class="a" style="left:798.0px;top:93.0px;" width="8" height="6" viewBox="-4.0 -3.0 8 6"><path d="M-2.1 -1.4 L2.1 -1.4 L0 1.7 Z" fill="#d4d4d4"/></svg>
<div class="a " style="left:824px;top:61px;width:1px;height:52px;background:#e6e6e6"></div>
<svg class="a" style="left:840.3px;top:64.0px;" width="24" height="22" viewBox="-12.0 -11.0 24 22"><rect x="-9.6" y="-8.4" width="19.2" height="16.8" rx="1" fill="none" stroke="#666" stroke-width="1.1" stroke-dasharray="2.4 1.6"/><path d="M-5.6 3 L-2.2 -4.6 L1.2 3 M-4.4 0.6 H0" fill="none" stroke="#444" stroke-width="1.1"/><path d="M3 -1.6 H7 M3 1 H7 M-6 5.4 H7" stroke="#888" stroke-width="0.9"/></svg>
<div class="a t " style="left:834px;top:89.0px;font-size:10.7px;color:#3a3a3a;">文本框</div>
<svg class="a" style="left:867.0px;top:93.0px;" width="8" height="6" viewBox="-4.0 -3.0 8 6"><path d="M-2.3 -1.4 L2.3 -1.4 L0 1.7 Z" fill="#777"/></svg>
<svg class="a" style="left:886.0px;top:62.3px;" width="26" height="24" viewBox="-13.0 -12.0 26 24"><rect x="-3" y="-9.6" width="14" height="13.6" rx="1.6" fill="none" stroke="#555" stroke-width="1.2"/><circle cx="-4.4" cy="3.6" r="6.6" fill="#fce9df" stroke="#c9a898" stroke-width="1"/></svg>
<div class="a t " style="left:884.5px;top:89.0px;font-size:10.7px;color:#3a3a3a;">形状</div>
<svg class="a" style="left:907.0px;top:93.0px;" width="8" height="6" viewBox="-4.0 -3.0 8 6"><path d="M-2.3 -1.4 L2.3 -1.4 L0 1.7 Z" fill="#777"/></svg>
<svg class="a" style="left:922.0px;top:65.3px;" width="16" height="14" viewBox="-8.0 -7.0 16 14"><rect x="-6.6" y="-5.6" width="13.2" height="11.2" rx="1" fill="none" stroke="#555" stroke-width="1.1"/><circle cx="-2.6" cy="-2" r="1.3" fill="none" stroke="#e8834f" stroke-width="0.9"/><path d="M-6 3.6 L-2.4 0.6 L0.4 2.8 L3 0.2 L6.2 3" fill="none" stroke="#e8834f" stroke-width="0.9"/></svg>
<div class="a t " style="left:941px;top:64.7px;font-size:10.7px;color:#3a3a3a;">图片</div>
<svg class="a" style="left:964.0px;top:70.0px;" width="8" height="6" viewBox="-4.0 -3.0 8 6"><path d="M-2.1 -1.4 L2.1 -1.4 L0 1.7 Z" fill="#777"/></svg>
<svg class="a" style="left:921.5px;top:87.5px;" width="16" height="16" viewBox="-8.0 -8.0 16 16"><path d="M0 -6.4 L6 -3.4 L0 -0.4 L-6 -3.4 Z M-6 -0.2 L0 2.8 L6 -0.2 M-6 3 L0 6 L6 3" fill="none" stroke="#555" stroke-width="1.1" stroke-linejoin="round"/></svg>
<div class="a t " style="left:941px;top:87.7px;font-size:10.7px;color:#3a3a3a;">排列</div>
<svg class="a" style="left:964.0px;top:93.0px;" width="8" height="6" viewBox="-4.0 -3.0 8 6"><path d="M-2.1 -1.4 L2.1 -1.4 L0 1.7 Z" fill="#777"/></svg>
<svg class="a" style="left:976.0px;top:65.0px;" width="16" height="14" viewBox="-8.0 -7.0 16 14"><path d="M-5.6 -0.6 L0 -5.8 L5.6 -0.6 V3 H-5.6 Z M-6 5.4 H6" fill="none" stroke="#d0d0d0" stroke-width="1.1" stroke-linejoin="round"/></svg>
<div class="a t " style="left:996px;top:64.7px;font-size:10.7px;color:#cbcbcb;">填充</div>
<svg class="a" style="left:1019.0px;top:70.0px;" width="8" height="6" viewBox="-4.0 -3.0 8 6"><path d="M-2.1 -1.4 L2.1 -1.4 L0 1.7 Z" fill="#d6d6d6"/></svg>
<svg class="a" style="left:976.0px;top:88.3px;" width="16" height="14" viewBox="-8.0 -7.0 16 14"><rect x="-5.4" y="-5.4" width="9.6" height="9.6" fill="none" stroke="#d0d0d0" stroke-width="1.1"/><path d="M-3 6 H6 V-3" fill="none" stroke="#d6d6d6" stroke-width="1.4"/></svg>
<div class="a t " style="left:996px;top:87.7px;font-size:10.7px;color:#cbcbcb;">轮廓</div>
<svg class="a" style="left:1019.0px;top:93.0px;" width="8" height="6" viewBox="-4.0 -3.0 8 6"><path d="M-2.1 -1.4 L2.1 -1.4 L0 1.7 Z" fill="#d6d6d6"/></svg>
<div class="a " style="left:1033.5px;top:61px;width:1.0px;height:52px;background:#e6e6e6"></div>
<svg class="a" style="left:1052.0px;top:63.0px;" width="24" height="24" viewBox="-12.0 -12.0 24 24"><path d="M-7.6 -9.4 H2.6 L7 -5 V9.2 H-7.6 Z M2.6 -9.4 V-5 H7" fill="none" stroke="#444" stroke-width="1.2" stroke-linejoin="round"/><path d="M5.6 -0.6 Q3 1 4.6 3.6 V9.6 H7.8 V3.6 Q9.6 1 6.8 -0.6 V2 H5.6 Z" fill="#fde3cf" stroke="#e9a066" stroke-width="0.9"/></svg>
<div class="a t " style="left:1042.5px;top:89.0px;font-size:10.7px;color:#3a3a3a;">文档助手</div>
<svg class="a" style="left:1106.7px;top:63.0px;" width="26" height="24" viewBox="-13.0 -12.0 26 24"><path d="M-9.6 -9 H9.6" stroke="#444" stroke-width="1.4"/><rect x="-8.4" y="-7.6" width="16.8" height="11.6" fill="none" stroke="#444" stroke-width="1.2"/><path d="M0 4 V8.4 M-4.6 8.8 H4.6" stroke="#444" stroke-width="1.2"/><path d="M5.2 -3.6 Q3 -2 4.4 0.4 V6.2 H7.6 V0.4 Q9.2 -2 6.6 -3.6 V-1 H5.2 Z" fill="#fde3cf" stroke="#e9a066" stroke-width="0.9"/></svg>
<div class="a t " style="left:1095px;top:89.0px;font-size:10.7px;color:#3a3a3a;">演示工具</div>
<svg class="a" style="left:1138.5px;top:93.0px;" width="8" height="6" viewBox="-4.0 -3.0 8 6"><path d="M-2.3 -1.4 L2.3 -1.4 L0 1.7 Z" fill="#777"/></svg>
<svg class="a" style="left:1154.0px;top:64.7px;" width="16" height="16" viewBox="-8.0 -8.0 16 16"><circle cx="-1.4" cy="-1.4" r="4.4" fill="#fdf1ea" stroke="#e9a985" stroke-width="1.1"/><path d="M2 2 L5.8 6" stroke="#666" stroke-width="1.8" stroke-linecap="round"/></svg>
<div class="a t " style="left:1173.5px;top:64.7px;font-size:10.7px;color:#3a3a3a;">查找</div>
<div class="a t " style="left:1154px;top:83.5px;font-size:6.5px;color:#555;font-family:'Liberation Sans',sans-serif;">AB</div>
<div class="a t " style="left:1154px;top:91.0px;font-size:6.5px;color:#e9a078;font-family:'Liberation Sans',sans-serif;">AC</div>
<svg class="a" style="left:1162.5px;top:89.5px;" width="8" height="12" viewBox="-4.0 -6.0 8 12"><path d="M-2 -4 H1 Q3 -4 3 -2 V2 H-2.6 M-1 0.2 L-3 2 L-1 3.8" fill="none" stroke="#555" stroke-width="1"/></svg>
<div class="a t " style="left:1173.5px;top:87.7px;font-size:10.7px;color:#3a3a3a;">替换</div>
<div class="a " style="left:1200.5px;top:60.5px;width:11.5px;height:54.0px;background:#c6c6c6"></div>
<svg class="a" style="left:1202.5px;top:85.0px;" width="6" height="8" viewBox="-3.0 -4.0 6 8"><path d="M-1.4 -2.6 L1.2 0 L-1.4 2.6" fill="none" stroke="#9a9a9a" stroke-width="0.9"/></svg>
<div class="a " style="left:0px;top:118px;width:210px;height:506px;background:#e9e9e9;border-right:1px solid #dadada"></div>
<svg class="a" style="left:5.5px;top:132.0px;" width="10" height="8" viewBox="-5.0 -4.0 10 8"><path d="M-1 -3 L-4 0 L-1 3 M3 -3 L0 0 L3 3" fill="none" stroke="#999" stroke-width="0.9"/></svg>
<div class="a t " style="left:66.5px;top:128.0px;font-size:10.7px;color:#444;">大纲</div>
<div class="a " style="left:99.5px;top:127.3px;width:50.0px;height:18.0px;background:#a6a6a6;border-radius:9px;color:#fff;font-size:10.7px;line-height:18px;text-align:center">幻灯片</div>
<div class="a tno" style="left:15.5px;top:162.7px;color:#333">13</div><div class="a th t13" style="left:30.4px;top:157.2px;width:162.6px;height:121.7px;border:1px solid #cfcfcf"><div class="a slide" style="left:0;top:0;width:586.5px;height:439.5px;transform:scale(0.2769);transform-origin:0 0"><svg class="a" style="left:0;top:0;overflow:hidden" width="586.5" height="439.5" viewBox="0 0 586.5 439.5"><g filter="url(#f-b2)"><circle cx="469.6" cy="332.7" r="10" fill="#e4e4e4" opacity="0.8"/><circle cx="503.5" cy="343.2" r="4" fill="#e4e4e4" opacity="0.8"/><circle cx="450.9" cy="362.3" r="11" fill="#e4e4e4" opacity="0.8"/><circle cx="435.3" cy="386.6" r="9" fill="#e4e4e4" opacity="0.8"/><circle cx="452.5" cy="383.5" r="12" fill="#e4e4e4" opacity="0.8"/><circle cx="560.2" cy="350.7" r="8" fill="#e4e4e4" opacity="0.8"/><circle cx="535.2" cy="360.8" r="7" fill="#e4e4e4" opacity="0.8"/><circle cx="558.6" cy="411.6" r="8" fill="#e4e4e4" opacity="0.8"/><circle cx="310.2" cy="423.3" r="6" fill="#e4e4e4" opacity="0.8"/><circle cx="393.2" cy="430.0" r="6" fill="#e4e4e4" opacity="0.8"/><circle cx="462.5" cy="372.3" r="8" fill="#e4e4e4" opacity="0.8"/></g><circle cx="587.5" cy="229.3" r="23.6" fill="#fbbd18"/><circle cx="586.3" cy="266.8" r="17" fill="#27b4c9"/><circle cx="571.3" cy="290.3" r="11" fill="#27b4c9"/><circle cx="542.2" cy="301.6" r="5" fill="#27b4c9"/><circle cx="568.8" cy="328.5" r="7.5" fill="#fbbd18"/><circle cx="579.2" cy="326.2" r="5" fill="#27b4c9"/><circle cx="461.1" cy="435.0" r="9" fill="#27b4c9"/><circle cx="489.9" cy="428.3" r="10" fill="#27b4c9"/><circle cx="472.8" cy="421.7" r="10" fill="#e8452b"/><circle cx="497.7" cy="388.2" r="34.7" fill="#fbbd18"/><circle cx="475.5" cy="406.3" r="9" fill="#f0b516" opacity="0.55"/><circle cx="506.5" cy="398.3" r="10" fill="#f0b516" opacity="0.55"/><circle cx="490.5" cy="370.3" r="7" fill="#f0b516" opacity="0.5"/><circle cx="565.7" cy="369.7" r="14.4" fill="#e8452b"/><circle cx="547.7" cy="385.8" r="20.3" fill="#e8452b"/><circle cx="551.1" cy="390.0" r="10.6" fill="#a90f22"/><circle cx="581.3" cy="371.0" r="4.6" fill="#1a8f9a"/><circle cx="522.4" cy="414.4" r="9" fill="#e8452b"/><circle cx="519.6" cy="428.7" r="11" fill="#e8452b"/><circle cx="505.1" cy="422.2" r="6.5" fill="#a90f22"/><circle cx="510.2" cy="433.4" r="6" fill="#a90f22"/><circle cx="474.3" cy="427.2" r="11.5" fill="#27342b"/><circle cx="480.5" cy="435.0" r="12" fill="#27342b"/><circle cx="494.6" cy="433.4" r="11" fill="#2d9a1e"/><circle cx="583.6" cy="405.6" r="7.8" fill="#a3219c"/><circle cx="544.3" cy="427.6" r="5.5" fill="#a3219c"/><circle cx="585.2" cy="427.2" r="7" fill="#a3219c"/><circle cx="585.5" cy="437.3" r="6" fill="#1d3f8a"/><circle cx="566.4" cy="430.0" r="8.1" fill="#e8452b"/><circle cx="552.4" cy="436.9" r="10" fill="#fbbd18"/><circle cx="308.5" cy="439.8" r="4" fill="#a3219c"/></svg><div class="a stitle" style="left:74px;top:38px;font-size:19px;color:#7c7c7c">（三）当前统筹经济社会发展的主要工作</div><div class="a sl " style="left:78.6px;top:70.75px;height:22.5px;line-height:22.5px;font-size:17px;">政府工作报告提出今年发展主要目标任务：优先稳就业保</div><div class="a sl " style="left:58.6px;top:93.25px;height:22.5px;line-height:22.5px;font-size:17px;">民生，坚决打赢脱贫攻坚战，努力实现 全面建成小</div><div class="a sl " style="left:58.6px;top:115.75px;height:22.5px;line-height:22.5px;font-size:17px;">康社会目标任务。</div><div class="a sl " style="left:78.6px;top:138.25px;height:22.5px;line-height:22.5px;font-size:17px;"><span class="dash"></span>城镇新增就业900万人以上，城镇调查失业率6%左</div><div class="a sl " style="left:58.6px;top:160.75px;height:22.5px;line-height:22.5px;font-size:17px;">右，城镇登记失业率5.5%左右；</div><div class="a sl " style="left:78.6px;top:183.25px;height:22.5px;line-height:22.5px;font-size:17px;"><span class="dash"></span>居民消费价格涨幅3.5%左右；</div><div class="a sl " style="left:78.6px;top:205.75px;height:22.5px;line-height:22.5px;font-size:17px;"><span class="dash"></span>进出口促稳提质，国际收支基本平衡；</div><div class="a sl " style="left:78.6px;top:228.25px;height:22.5px;line-height:22.5px;font-size:17px;"><span class="dash"></span>居民收入增长与经济增长基本同步；</div><div class="a sl " style="left:78.6px;top:250.75px;height:22.5px;line-height:22.5px;font-size:17px;"><span class="dash"></span>现行标准下农村贫困人口全部脱贫、贫困县全部摘</div><div class="a sl " style="left:58.6px;top:273.25px;height:22.5px;line-height:22.5px;font-size:17px;">帽；</div><div class="a sl " style="left:78.6px;top:295.75px;height:22.5px;line-height:22.5px;font-size:17px;"><span class="dash"></span>重大金融风险有效防控；</div><div class="a sl " style="left:78.6px;top:318.25px;height:22.5px;line-height:22.5px;font-size:17px;"><span class="dash"></span>单位国内生产总值能耗和主要污染物排放量继续下</div><div class="a sl " style="left:58.6px;top:340.75px;height:22.5px;line-height:22.5px;font-size:17px;">降，努力完成“十三五”规划目标任务</div></div></div><div class="a tno" style="left:15.5px;top:300.5px;color:#333">14</div><div class="a th t14" style="left:30.4px;top:295px;width:162.6px;height:121.7px;border:1px solid #cfcfcf"><div class="a slide" style="left:0;top:0;width:586.5px;height:439.5px;transform:scale(0.2769);transform-origin:0 0"><svg class="a" style="left:0;top:0;overflow:hidden" width="586.5" height="439.5" viewBox="0 0 586.5 439.5"><circle cx="587.5" cy="229.3" r="23.6" fill="#fbbd18"/><circle cx="586.3" cy="266.8" r="17" fill="#27b4c9"/><circle cx="571.3" cy="290.3" r="11" fill="#27b4c9"/><circle cx="542.2" cy="301.6" r="5" fill="#27b4c9"/><circle cx="568.8" cy="328.5" r="7.5" fill="#fbbd18"/><circle cx="579.2" cy="326.2" r="5" fill="#27b4c9"/><circle cx="461.1" cy="435.0" r="9" fill="#27b4c9"/><circle cx="489.9" cy="428.3" r="10" fill="#27b4c9"/><circle cx="472.8" cy="421.7" r="10" fill="#e8452b"/><circle cx="522.4" cy="414.4" r="9" fill="#e8452b"/><circle cx="519.6" cy="428.7" r="11" fill="#e8452b"/><circle cx="505.1" cy="422.2" r="6.5" fill="#a90f22"/><circle cx="510.2" cy="433.4" r="6" fill="#a90f22"/><circle cx="474.3" cy="427.2" r="11.5" fill="#27342b"/><circle cx="480.5" cy="435.0" r="12" fill="#27342b"/><circle cx="494.6" cy="433.4" r="11" fill="#2d9a1e"/><circle cx="583.6" cy="405.6" r="7.8" fill="#a3219c"/><circle cx="544.3" cy="427.6" r="5.5" fill="#a3219c"/><circle cx="585.2" cy="427.2" r="7" fill="#a3219c"/><circle cx="585.5" cy="437.3" r="6" fill="#1d3f8a"/><circle cx="566.4" cy="430.0" r="8.1" fill="#e8452b"/><circle cx="552.4" cy="436.9" r="10" fill="#fbbd18"/><circle cx="308.5" cy="439.8" r="4" fill="#a3219c"/><circle cx="568.5" cy="404.3" r="9" fill="#e8452b"/><circle cx="575.5" cy="412.3" r="6" fill="#e8452b"/></svg><div class="a sl " style="left:72.6px;top:47.58px;height:18.85px;line-height:18.85px;font-size:14.7px;width:472px;overflow:hidden;"><b>在对工作报告解读中，要用发展的眼光 看总量、看基本面、看潜力，</b></div><div class="a sl " style="left:44.6px;top:66.42px;height:18.85px;line-height:18.85px;font-size:14.7px;width:500px;overflow:hidden;"><b>疫情冲击，我国经济面临前所未有的困难，但长期向好的基本面没有改变，</b></div><div class="a sl " style="left:44.6px;top:85.28px;height:18.85px;line-height:18.85px;font-size:14.7px;width:500px;overflow:hidden;"><b>综合研判形势，对疫情前考虑的预期目标作了适当调整。</b></div><div class="a sl " style="left:72.6px;top:104.13px;height:18.85px;line-height:18.85px;font-size:14.7px;width:472px;overflow:hidden;"><b><span class="dash"></span>没有提出全年经济增速具体目标，主要因为全球疫情和经贸形势不</b></div><div class="a sl " style="left:44.6px;top:122.98px;height:18.85px;line-height:18.85px;font-size:14.7px;width:500px;overflow:hidden;"><b>确定性很大，我国发展面临一些难以预料的影响因素（2020年5月22日），这样做有利于</b></div><div class="a sl " style="left:44.6px;top:141.82px;height:18.85px;line-height:18.85px;font-size:14.7px;width:500px;overflow:hidden;"><b>引导各方面集中精力，抓好六稳六保。</b></div><div class="a sl " style="left:72.6px;top:160.68px;height:18.85px;line-height:18.85px;font-size:14.7px;width:472px;overflow:hidden;"><b><span class="dash"></span>六保是今年六稳工作的着力点，守住六保底线就能稳住经济基本盘</b></div><div class="a sl " style="left:44.6px;top:179.53px;height:18.85px;line-height:18.85px;font-size:14.7px;width:500px;overflow:hidden;"><b>以保促稳、稳中求进，就能为全面建成小康社会夯实基础。无论是保住就业民生、</b></div><div class="a sl " style="left:44.6px;top:198.38px;height:18.85px;line-height:18.85px;font-size:14.7px;width:500px;overflow:hidden;"><b>实现脱贫目标，还是防范化解风险，都要有经济增长支撑，稳定经济运行，事</b></div><div class="a sl " style="left:44.6px;top:217.22px;height:18.85px;line-height:18.85px;font-size:14.7px;width:500px;overflow:hidden;"><b>关全局。要用改革开放办法稳就业保民生促消费，拉动市场稳定增长走出一条</b></div><div class="a sl " style="left:44.6px;top:236.07px;height:18.85px;line-height:18.85px;font-size:14.7px;width:500px;overflow:hidden;"><b>有效应对冲击、实现良性循环的新路子，积极的财政政策要更加积极有为。</b></div><div class="a sl " style="left:72.6px;top:254.93px;height:18.85px;line-height:18.85px;font-size:14.7px;width:472px;overflow:hidden;"><b><span class="dash"></span>今年赤字率拟按3.6%以上安排，“特殊时期”的特殊举措，财政赤字规模比去</b></div><div class="a sl " style="left:44.6px;top:273.78px;height:18.85px;line-height:18.85px;font-size:14.7px;width:500px;overflow:hidden;"><b>年增加一万亿元，同时发行一万亿元抗疫特别国债，全部转给地方，建立特殊</b></div><div class="a sl " style="left:44.6px;top:292.62px;height:18.85px;line-height:18.85px;font-size:14.7px;width:500px;overflow:hidden;"><b>转移支付机制，资金直达市县基层，直接惠企利民，主要用于保就业、保基本民生、</b></div><div class="a sl " style="left:44.6px;top:311.48px;height:18.85px;line-height:18.85px;font-size:14.7px;width:500px;overflow:hidden;"><b>保市场主体，包括支持减税降费、减租降息、扩大消费和投资等，强化公共财政</b></div><div class="a sl " style="left:44.6px;top:330.32px;height:18.85px;line-height:18.85px;font-size:14.7px;width:500px;overflow:hidden;"><b>属性，决不允许截留挪用。</b></div><div class="a sl " style="left:72.6px;top:349.18px;height:18.85px;line-height:18.85px;font-size:14.7px;width:472px;overflow:hidden;"><b><span class="dash"></span>稳健的货币政策要更加灵活适度，综合运用降准降息、再贷款等手段，引导广义</b></div><div class="a sl " style="left:44.6px;top:368.03px;height:18.85px;line-height:18.85px;font-size:14.7px;width:500px;overflow:hidden;"><b>货币供应量和社会融资规模增速明显高于去年。</b></div></div></div><div class="a tno" style="left:15.5px;top:438.1px;color:#d2622e">15</div><div class="a th t15" style="left:30.4px;top:432.6px;width:162.6px;height:122.6px;border:2px solid #f07a56;border-radius:3px"><div class="a slide" style="left:0;top:0;width:586.5px;height:439.5px;transform:scale(0.2769);transform-origin:0 0"><svg class="a" style="left:0;top:0;overflow:hidden" width="586.5" height="439.5" viewBox="0 0 586.5 439.5"><g filter="url(#f-b2)"><circle cx="469.6" cy="332.7" r="10" fill="#e4e4e4" opacity="0.8"/><circle cx="503.5" cy="343.2" r="4" fill="#e4e4e4" opacity="0.8"/><circle cx="450.9" cy="362.3" r="11" fill="#e4e4e4" opacity="0.8"/><circle cx="435.3" cy="386.6" r="9" fill="#e4e4e4" opacity="0.8"/><circle cx="452.5" cy="383.5" r="12" fill="#e4e4e4" opacity="0.8"/><circle cx="560.2" cy="350.7" r="8" fill="#e4e4e4" opacity="0.8"/><circle cx="535.2" cy="360.8" r="7" fill="#e4e4e4" opacity="0.8"/><circle cx="558.6" cy="411.6" r="8" fill="#e4e4e4" opacity="0.8"/><circle cx="310.2" cy="423.3" r="6" fill="#e4e4e4" opacity="0.8"/><circle cx="393.2" cy="430.0" r="6" fill="#e4e4e4" opacity="0.8"/><circle cx="462.5" cy="372.3" r="8" fill="#e4e4e4" opacity="0.8"/></g><circle cx="587.5" cy="229.3" r="23.6" fill="#fbbd18"/><circle cx="586.3" cy="266.8" r="17" fill="#27b4c9"/><circle cx="571.3" cy="290.3" r="11" fill="#27b4c9"/><circle cx="542.2" cy="301.6" r="5" fill="#27b4c9"/><circle cx="568.8" cy="328.5" r="7.5" fill="#fbbd18"/><circle cx="579.2" cy="326.2" r="5" fill="#27b4c9"/><circle cx="461.1" cy="435.0" r="9" fill="#27b4c9"/><circle cx="489.9" cy="428.3" r="10" fill="#27b4c9"/><circle cx="472.8" cy="421.7" r="10" fill="#e8452b"/><circle cx="497.7" cy="388.2" r="34.7" fill="#fbbd18"/><circle cx="475.5" cy="406.3" r="9" fill="#f0b516" opacity="0.55"/><circle cx="506.5" cy="398.3" r="10" fill="#f0b516" opacity="0.55"/><circle cx="490.5" cy="370.3" r="7" fill="#f0b516" opacity="0.5"/><circle cx="565.7" cy="369.7" r="14.4" fill="#e8452b"/><circle cx="547.7" cy="385.8" r="20.3" fill="#e8452b"/><circle cx="551.1" cy="390.0" r="10.6" fill="#a90f22"/><circle cx="581.3" cy="371.0" r="4.6" fill="#1a8f9a"/><circle cx="522.4" cy="414.4" r="9" fill="#e8452b"/><circle cx="519.6" cy="428.7" r="11" fill="#e8452b"/><circle cx="505.1" cy="422.2" r="6.5" fill="#a90f22"/><circle cx="510.2" cy="433.4" r="6" fill="#a90f22"/><circle cx="474.3" cy="427.2" r="11.5" fill="#27342b"/><circle cx="480.5" cy="435.0" r="12" fill="#27342b"/><circle cx="494.6" cy="433.4" r="11" fill="#2d9a1e"/><circle cx="583.6" cy="405.6" r="7.8" fill="#a3219c"/><circle cx="544.3" cy="427.6" r="5.5" fill="#a3219c"/><circle cx="585.2" cy="427.2" r="7" fill="#a3219c"/><circle cx="585.5" cy="437.3" r="6" fill="#1d3f8a"/><circle cx="566.4" cy="430.0" r="8.1" fill="#e8452b"/><circle cx="552.4" cy="436.9" r="10" fill="#fbbd18"/><circle cx="308.5" cy="439.8" r="4" fill="#a3219c"/></svg><div class="a stitle" style="left:45.3px;top:34.2px">（四）解读几个问题</div><div class="a sl " style="left:65.2px;top:59.3px;height:21.8px;line-height:21.8px;"><span class="nu">1.</span>要加强领导，而领导要敢于担当</div><div class="a sl tight" style="left:65.2px;top:81.1px;height:21.8px;line-height:21.8px;">习近平在统筹推进新冠肺炎疫情防控和经济社会发展工作</div><div class="a sl " style="left:36.6px;top:102.9px;height:21.8px;line-height:21.8px;">部署会议上的讲话指出：“在统筹推进疫情防控和经济社会</div><div class="a sl " style="left:36.6px;top:124.7px;height:21.8px;line-height:21.8px;">发展工作中，各级干部特别是领导干部必须增强必胜之心，</div><div class="a sl " style="left:36.6px;top:146.5px;height:21.8px;line-height:21.8px;">拿出战胜一切敌人而不被任何敌人所屈服的大无畏革命气魄，</div><div class="a sl " style="left:36.6px;top:168.3px;height:21.8px;line-height:21.8px;">勇当先锋，<b>敢打头阵</b>，用行动展现共产党人政治本色；必须</div><div class="a sl " style="left:36.6px;top:190.1px;height:21.8px;line-height:21.8px;">增强责任之心，把初心落在行动上、把使命担在肩膀上，在</div><div class="a sl " style="left:36.6px;top:211.9px;height:21.8px;line-height:21.8px;">其位谋其政，在其职尽其责，<b>主动担当、积极作为</b>；必须增</div><div class="a sl " style="left:36.6px;top:233.7px;height:21.8px;line-height:21.8px;">强仁爱之心，当好人民群众贴心人，及时解决群众所急所忧</div><div class="a sl " style="left:36.6px;top:255.5px;height:21.8px;line-height:21.8px;">所思所盼；必须增强谨慎之心，对风险因素要有<b>底线思维</b>，</div><div class="a sl " style="left:36.6px;top:277.3px;height:21.8px;line-height:21.8px;">对解决问题要<b>一抓到底</b>，一时一刻不放松，一丝一毫不马虎，</div><div class="a sl " style="left:36.6px;top:299.1px;height:21.8px;line-height:21.8px;">直至取得最后胜利。</div><div class="a sl " style="left:65.2px;top:320.9px;height:21.8px;line-height:21.8px;"><span class="nu">2.</span>财政压力怎么看</div><div class="a sl " style="left:65.2px;top:342.7px;height:21.8px;line-height:21.8px;"><span class="nu">3.</span>就业压力怎样看</div><div class="a sl " style="left:65.2px;top:364.5px;height:21.8px;line-height:21.8px;"><span class="nu">4.</span>物价水平如何看</div><div class="a sl " style="left:65.2px;top:386.3px;height:21.8px;line-height:21.8px;"><span class="nu">5.</span>我们广东的发展态势</div></div></div><div class="a tno" style="left:15.5px;top:575.9px;color:#333">16</div><div class="a th t16" style="left:30.4px;top:570.4px;width:162.6px;height:24.6px;border:1px solid #cfcfcf"><div class="a slide" style="left:0;top:0;width:586.5px;height:439.5px;transform:scale(0.2769);transform-origin:0 0"><div class="a" style="left:0;top:31px;width:586px;text-align:center;font:600 21px/20px 'Liberation Serif','Noto Serif CJK SC',serif;color:#222">17座“GDP万亿”城市2-4月经济复苏指数</div><div class="a" style="left:92px;top:72px;width:392px;height:30px;background:linear-gradient(180deg,#4f86c6 0,#4f86c6 9px,#dfe7f2 9px)"></div><div class="a" style="left:50px;top:72px;width:36px;height:30px;background:#e3e3e3"></div><div class="a" style="left:490px;top:72px;width:36px;height:30px;background:#e3e3e3"></div></div></div>
<div class="a " style="left:199px;top:472px;width:6px;height:74.5px;background:#b8b8b8;border-radius:3px"></div>
<div class="a " style="left:0px;top:595px;width:210px;height:29px;background:#e9e9e9;border-right:1px solid #dadada"></div>
<svg class="a" style="left:97.0px;top:600.7px;" width="14" height="14" viewBox="-7.0 -7.0 14 14"><path d="M-6 0 H6 M0 -6 V6" stroke="#555" stroke-width="1.2"/></svg>
<div class="a " style="left:211px;top:118px;width:947.5px;height:477px;background:#e6e6e6"></div>
<div class="a slide" id="mainslide" style="left:380.5px;top:135.7px;width:586.5px;height:439.5px"><svg class="a" style="left:0;top:0;overflow:hidden" width="586.5" height="439.5" viewBox="0 0 586.5 439.5"><g filter="url(#f-b2)"><circle cx="469.6" cy="332.7" r="10" fill="#e4e4e4" opacity="0.8"/><circle cx="503.5" cy="343.2" r="4" fill="#e4e4e4" opacity="0.8"/><circle cx="450.9" cy="362.3" r="11" fill="#e4e4e4" opacity="0.8"/><circle cx="435.3" cy="386.6" r="9" fill="#e4e4e4" opacity="0.8"/><circle cx="452.5" cy="383.5" r="12" fill="#e4e4e4" opacity="0.8"/><circle cx="560.2" cy="350.7" r="8" fill="#e4e4e4" opacity="0.8"/><circle cx="535.2" cy="360.8" r="7" fill="#e4e4e4" opacity="0.8"/><circle cx="558.6" cy="411.6" r="8" fill="#e4e4e4" opacity="0.8"/><circle cx="310.2" cy="423.3" r="6" fill="#e4e4e4" opacity="0.8"/><circle cx="393.2" cy="430.0" r="6" fill="#e4e4e4" opacity="0.8"/><circle cx="462.5" cy="372.3" r="8" fill="#e4e4e4" opacity="0.8"/></g><circle cx="587.5" cy="229.3" r="23.6" fill="#fbbd18"/><circle cx="586.3" cy="266.8" r="17" fill="#27b4c9"/><circle cx="571.3" cy="290.3" r="11" fill="#27b4c9"/><circle cx="542.2" cy="301.6" r="5" fill="#27b4c9"/><circle cx="568.8" cy="328.5" r="7.5" fill="#fbbd18"/><circle cx="579.2" cy="326.2" r="5" fill="#27b4c9"/><circle cx="461.1" cy="435.0" r="9" fill="#27b4c9"/><circle cx="489.9" cy="428.3" r="10" fill="#27b4c9"/><circle cx="472.8" cy="421.7" r="10" fill="#e8452b"/><circle cx="497.7" cy="388.2" r="34.7" fill="#fbbd18"/><circle cx="475.5" cy="406.3" r="9" fill="#f0b516" opacity="0.55"/><circle cx="506.5" cy="398.3" r="10" fill="#f0b516" opacity="0.55"/><circle cx="490.5" cy="370.3" r="7" fill="#f0b516" opacity="0.5"/><circle cx="565.7" cy="369.7" r="14.4" fill="#e8452b"/><circle cx="547.7" cy="385.8" r="20.3" fill="#e8452b"/><circle cx="551.1" cy="390.0" r="10.6" fill="#a90f22"/><circle cx="581.3" cy="371.0" r="4.6" fill="#1a8f9a"/><circle cx="522.4" cy="414.4" r="9" fill="#e8452b"/><circle cx="519.6" cy="428.7" r="11" fill="#e8452b"/><circle cx="505.1" cy="422.2" r="6.5" fill="#a90f22"/><circle cx="510.2" cy="433.4" r="6" fill="#a90f22"/><circle cx="474.3" cy="427.2" r="11.5" fill="#27342b"/><circle cx="480.5" cy="435.0" r="12" fill="#27342b"/><circle cx="494.6" cy="433.4" r="11" fill="#2d9a1e"/><circle cx="583.6" cy="405.6" r="7.8" fill="#a3219c"/><circle cx="544.3" cy="427.6" r="5.5" fill="#a3219c"/><circle cx="585.2" cy="427.2" r="7" fill="#a3219c"/><circle cx="585.5" cy="437.3" r="6" fill="#1d3f8a"/><circle cx="566.4" cy="430.0" r="8.1" fill="#e8452b"/><circle cx="552.4" cy="436.9" r="10" fill="#fbbd18"/><circle cx="308.5" cy="439.8" r="4" fill="#a3219c"/></svg><div class="a stitle" style="left:45.3px;top:34.2px">（四）解读几个问题</div><div class="a sl " style="left:65.2px;top:59.3px;height:21.8px;line-height:21.8px;"><span class="nu">1.</span>要加强领导，而领导要敢于担当</div><div class="a sl tight" style="left:65.2px;top:81.1px;height:21.8px;line-height:21.8px;">习近平在统筹推进新冠肺炎疫情防控和经济社会发展工作</div><div class="a sl " style="left:36.6px;top:102.9px;height:21.8px;line-height:21.8px;">部署会议上的讲话指出：“在统筹推进疫情防控和经济社会</div><div class="a sl " style="left:36.6px;top:124.7px;height:21.8px;line-height:21.8px;">发展工作中，各级干部特别是领导干部必须增强必胜之心，</div><div class="a sl " style="left:36.6px;top:146.5px;height:21.8px;line-height:21.8px;">拿出战胜一切敌人而不被任何敌人所屈服的大无畏革命气魄，</div><div class="a sl " style="left:36.6px;top:168.3px;height:21.8px;line-height:21.8px;">勇当先锋，<b>敢打头阵</b>，用行动展现共产党人政治本色；必须</div><div class="a sl " style="left:36.6px;top:190.1px;height:21.8px;line-height:21.8px;">增强责任之心，把初心落在行动上、把使命担在肩膀上，在</div><div class="a sl " style="left:36.6px;top:211.9px;height:21.8px;line-height:21.8px;">其位谋其政，在其职尽其责，<b>主动担当、积极作为</b>；必须增</div><div class="a sl " style="left:36.6px;top:233.7px;height:21.8px;line-height:21.8px;">强仁爱之心，当好人民群众贴心人，及时解决群众所急所忧</div><div class="a sl " style="left:36.6px;top:255.5px;height:21.8px;line-height:21.8px;">所思所盼；必须增强谨慎之心，对风险因素要有<b>底线思维</b>，</div><div class="a sl " style="left:36.6px;top:277.3px;height:21.8px;line-height:21.8px;">对解决问题要<b>一抓到底</b>，一时一刻不放松，一丝一毫不马虎，</div><div class="a sl " style="left:36.6px;top:299.1px;height:21.8px;line-height:21.8px;">直至取得最后胜利。</div><div class="a sl " style="left:65.2px;top:320.9px;height:21.8px;line-height:21.8px;"><span class="nu">2.</span>财政压力怎么看</div><div class="a sl " style="left:65.2px;top:342.7px;height:21.8px;line-height:21.8px;"><span class="nu">3.</span>就业压力怎样看</div><div class="a sl " style="left:65.2px;top:364.5px;height:21.8px;line-height:21.8px;"><span class="nu">4.</span>物价水平如何看</div><div class="a sl " style="left:65.2px;top:386.3px;height:21.8px;line-height:21.8px;"><span class="nu">5.</span>我们广东的发展态势</div></div><svg class="a" style="left:649px;top:401px;" width="6" height="16"><path d="M0.6 0.6 Q3 0.6 3 3 V13 Q3 15.4 0.6 15.4 M5.4 0.6 Q3 0.6 3 3 M5.4 15.4 Q3 15.4 3 13" fill="none" stroke="#333" stroke-width="0.9"/></svg>
<div class="a " style="left:1158.5px;top:118px;width:13.5px;height:477px;background:#f0f0f0"></div>
<svg class="a" style="left:1161.3px;top:126.0px;" width="8" height="6" viewBox="-4.0 -3.0 8 6"><path d="M-2.6 1.4 L0 -1.6 L2.6 1.4 Z" fill="#777"/></svg>
<div class="a " style="left:1160.3px;top:452px;width:10.7px;height:37px;background:#fff;border:1px solid #c9c9c9;border-radius:5px"></div>
<svg class="a" style="left:1161.3px;top:537.5px;" width="8" height="6" viewBox="-4.0 -3.0 8 6"><path d="M-2.6 -1.4 L0 1.6 L2.6 -1.4 Z" fill="#777"/></svg>
<svg class="a" style="left:1161.3px;top:552.5px;" width="8" height="8" viewBox="-4.0 -4.0 8 8"><path d="M-2.4 -0.4 L0 -3 L2.4 -0.4 Z M-2.4 3.2 L0 0.6 L2.4 3.2 Z" fill="#777"/></svg>
<svg class="a" style="left:1161.3px;top:568.5px;" width="8" height="8" viewBox="-4.0 -4.0 8 8"><path d="M-2.4 -3.2 L0 -0.6 L2.4 -3.2 Z M-2.4 0.4 L0 3 L2.4 0.4 Z" fill="#777"/></svg>
<div class="a " style="left:1172px;top:118px;width:40px;height:506px;background:#ececec;border-left:1px solid #e2e2e2"></div>
<svg class="a" style="left:1184.5px;top:125.3px;" width="14" height="6" viewBox="-7.0 -3.0 14 6"><path d="M-5.6 -1.2 H5.6 M-5.6 1.2 H5.6" stroke="#c2c2c2" stroke-width="0.9"/></svg>
<svg class="a" style="left:1184.2px;top:146.3px;" width="16" height="16" viewBox="-8.0 -8.0 16 16"><path d="M0 -6 L1.8 -2.2 L6 -1.8 L3 1 L3.8 5 L0 3 L-3.8 5 L-3 1 L-6 -1.8 L-1.8 -2.2 Z" fill="none" stroke="#555" stroke-width="1" stroke-linejoin="round"/><path d="M-6 5.6 L-3.6 3.4 M-3 6.6 L-1 4.6" stroke="#555" stroke-width="0.8"/></svg>
<div class="a t " style="left:1182.2px;top:162.3px;font-size:10.4px;color:#5a5a5a;">动画</div>
<svg class="a" style="left:1184.2px;top:192.4px;" width="16" height="16" viewBox="-8.0 -8.0 16 16"><rect x="-5.6" y="-5.6" width="8" height="7" rx="1.2" fill="none" stroke="#555" stroke-width="1"/><rect x="-2" y="-1.4" width="8" height="7" rx="1.2" fill="#ececec" stroke="#555" stroke-width="1"/><path d="M-5 3 Q-5 5.4 -2.8 5.4" fill="none" stroke="#555" stroke-width="0.9"/></svg>
<div class="a t " style="left:1182.2px;top:208.4px;font-size:10.4px;color:#5a5a5a;">切换</div>
<svg class="a" style="left:1184.2px;top:238.6px;" width="16" height="16" viewBox="-8.0 -8.0 16 16"><path d="M-6.4 5 L0 -6 L6.4 5 Z M-4 5 L0 -2 L4 5 M-3.4 2 H3.4" fill="none" stroke="#555" stroke-width="1" stroke-linejoin="round"/><path d="M-6.6 6.6 H6.6" stroke="#555" stroke-width="0.9"/></svg>
<div class="a t " style="left:1177.0px;top:254.6px;font-size:10.4px;color:#5a5a5a;">艺术字</div>
<svg class="a" style="left:1184.2px;top:284.8px;" width="16" height="16" viewBox="-8.0 -8.0 16 16"><rect x="-6" y="-6" width="5" height="5" rx="1" fill="none" stroke="#555" stroke-width="1"/><rect x="1" y="-6" width="5" height="5" rx="1" fill="none" stroke="#555" stroke-width="1"/><rect x="-6" y="1" width="5" height="5" rx="1" fill="none" stroke="#555" stroke-width="1"/><rect x="1" y="1" width="5" height="5" rx="1" fill="none" stroke="#555" stroke-width="1"/></svg>
<div class="a t " style="left:1182.2px;top:300.8px;font-size:10.4px;color:#5a5a5a;">颜色</div>
<svg class="a" style="left:1184.2px;top:330.9px;" width="16" height="16" viewBox="-8.0 -8.0 16 16"><path d="M-6 -6 V6 H6" fill="none" stroke="#555" stroke-width="1"/><rect x="-3.6" y="0" width="2.4" height="6" fill="none" stroke="#555" stroke-width="0.9"/><rect x="0" y="-2.6" width="2.4" height="8.6" fill="none" stroke="#555" stroke-width="0.9"/><rect x="3.4" y="-5" width="2.4" height="11" fill="none" stroke="#555" stroke-width="0.9"/></svg>
<div class="a t " style="left:1182.2px;top:346.9px;font-size:10.4px;color:#5a5a5a;">图表</div>
<svg class="a" style="left:1184.2px;top:377.0px;" width="16" height="16" viewBox="-8.0 -8.0 16 16"><path d="M-6.4 -4.4 H1 M4.6 -4.4 H6.4 M-6.4 0 H-4 M-0.4 0 H6.4 M-6.4 4.4 H1 M4.6 4.4 H6.4" stroke="#555" stroke-width="1"/><circle cx="2.8" cy="-4.4" r="1.7" fill="none" stroke="#555" stroke-width="1"/><circle cx="-2.2" cy="0" r="1.7" fill="none" stroke="#555" stroke-width="1"/><circle cx="2.8" cy="4.4" r="1.7" fill="none" stroke="#555" stroke-width="1"/></svg>
<div class="a t " style="left:1182.2px;top:393.0px;font-size:10.4px;color:#5a5a5a;">属性</div>
<svg class="a" style="left:1184.2px;top:423.2px;" width="16" height="16" viewBox="-8.0 -8.0 16 16"><rect x="-6.6" y="-5.6" width="13.2" height="11.2" rx="1.2" fill="none" stroke="#555" stroke-width="1"/><circle cx="2.6" cy="-2.2" r="1.2" fill="none" stroke="#555" stroke-width="0.9"/><path d="M-6 3.4 L-2.4 -0.4 L1 3 L3 1.2 L6 4" fill="none" stroke="#555" stroke-width="0.9"/></svg>
<div class="a t " style="left:1182.2px;top:439.2px;font-size:10.4px;color:#5a5a5a;">图库</div>
<svg class="a" style="left:1184.2px;top:469.4px;" width="16" height="16" viewBox="-8.0 -8.0 16 16"><path d="M0 -6.6 L5.8 -3.3 V3.3 L0 6.6 L-5.8 3.3 V-3.3 Z" fill="none" stroke="#555" stroke-width="1" stroke-linejoin="round"/><path d="M-0.6 2.8 Q-3 0.6 -0.4 -2.6 Q2.8 0 0.8 2.8 Z" fill="#555"/></svg>
<div class="a t " style="left:1182.2px;top:485.4px;font-size:10.4px;color:#5a5a5a;">风格</div>
<svg class="a" style="left:1184.2px;top:515.5px;" width="16" height="16" viewBox="-8.0 -8.0 16 16"><path d="M-5.4 -4 V-5.6 H5.4 V-4 M0 -5.6 V5.6 M-2.4 5.6 H2.4" fill="none" stroke="#555" stroke-width="1.1"/></svg>
<div class="a t " style="left:1177.0px;top:531.5px;font-size:10.4px;color:#5a5a5a;">云字体</div>
<div class="a " style="left:1180px;top:559.5px;width:26px;height:1.0px;background:#dcdcdc"></div>
<svg class="a" style="left:1185.2px;top:580.0px;" width="14" height="4" viewBox="-7.0 -2.0 14 4"><circle cx="-4" r="0.9" fill="none" stroke="#888" stroke-width="0.7"/><circle cx="0" r="0.9" fill="none" stroke="#888" stroke-width="0.7"/><circle cx="4" r="0.9" fill="none" stroke="#888" stroke-width="0.7"/></svg>
<div class="a t " style="left:1182.2px;top:589.0px;font-size:10.4px;color:#5a5a5a;">设置</div>
<div class="a " style="left:1188.5px;top:297.5px;width:23.5px;height:59.0px;background:rgba(70,70,70,.88)"></div>
<svg class="a" style="left:1196.0px;top:319.0px;" width="10" height="16" viewBox="-5.0 -8.0 10 16"><path d="M-2.6 -5.4 L2.8 0 L-2.6 5.4" fill="none" stroke="#b9b9b9" stroke-width="1.1"/></svg>
<div class="a " style="left:211px;top:595px;width:961px;height:29px;background:#ebebeb;border-top:1px solid #dedede"></div>
<svg class="a" style="left:217.3px;top:602.3px;" width="14" height="12" viewBox="-7.0 -6.0 14 12"><path d="M-5.6 -4.8 H5.6 V3 H-2.4 L-4.6 5 V3 H-5.6 Z M-3 -2 H3 M-3 0.4 H3" fill="none" stroke="#555" stroke-width="1"/></svg>
<div class="a t " style="left:239.5px;top:600.5px;font-size:11.4px;color:#555;">单击此处添加备注</div>
<div class="a " style="left:0px;top:624px;width:1212px;height:30px;background:#f4f4f4;border-top:1px solid #e0e0e0"></div>
<div class="a t " style="left:9px;top:631.3px;font-size:10.7px;color:#666;">幻灯片 15 / 0 .. 17</div>
<div class="a " style="left:109.5px;top:629px;width:1.0px;height:21px;background:#e2e2e2"></div>
<div class="a t " style="left:119px;top:631.3px;font-size:10.7px;color:#666;">广州建设具有全球影响力的资源配置中心研究(汇报pps)</div>
<div class="a " style="left:387.5px;top:629px;width:1.0px;height:21px;background:#e2e2e2"></div>
<svg class="a" style="left:401.0px;top:633.3px;" width="12" height="12" viewBox="-6.0 -6.0 12 12"><path d="M0 -5 L4.6 -3 V1 Q4.6 4 0 5.4 Q-4.6 4 -4.6 1 V-3 Z" fill="none" stroke="#777" stroke-width="0.9"/><path d="M-1.8 -1.6 L1.8 2 M1.8 -1.6 L-1.8 2" stroke="#777" stroke-width="0.9"/></svg>
<div class="a t " style="left:418px;top:631.3px;font-size:10.4px;color:#666;">文档未保护</div>
<div class="a " style="left:482px;top:629px;width:1px;height:21px;background:#e2e2e2"></div>
<div class="a t " style="left:499px;top:631.6px;font-size:10.5px;color:#666;font-family:'Liberation Sans',sans-serif;">T</div>
<div class="a t " style="left:505px;top:634.3px;font-size:7px;color:#666;font-family:'Liberation Sans',sans-serif;">a</div>
<div class="a t " style="left:516px;top:631.3px;font-size:10.4px;color:#666;">缺失字体</div>
<div class="a " style="left:576px;top:629px;width:1px;height:21px;background:#e2e2e2"></div>
<svg class="a" style="left:648.0px;top:632.3px;" width="14" height="14" viewBox="-7.0 -7.0 14 14"><path d="M0 -5.6 L5 -3 V3 L0 5.6 L-5 3 V-3 Z M-5 -3 L0 -0.4 L5 -3 M0 -0.4 V5.6" fill="none" stroke="#666" stroke-width="0.9" stroke-linejoin="round"/></svg>
<div class="a t " style="left:668.5px;top:631.3px;font-size:10.4px;color:#666;">一键美化</div>
<svg class="a" style="left:715.5px;top:637.3px;" width="6" height="6" viewBox="-3.0 -3.0 6 6"><path d="M-2 1.2 L0 -1.4 L2 1.2 Z" fill="#666"/></svg>
<svg class="a" style="left:785.0px;top:633.3px;" width="14" height="12" viewBox="-7.0 -6.0 14 12"><path d="M-5.6 -4 H5.6 M-5.6 -1.2 H5.6 M-5.6 1.6 H5.6 M-5.6 4.4 H0" stroke="#666" stroke-width="0.9"/><path d="M1.6 3.4 L3.6 5.6 L5.6 3.4 Z" fill="#555"/></svg>
<svg class="a" style="left:802.0px;top:636.8px;" width="8" height="6" viewBox="-4.0 -3.0 8 6"><path d="M-2.0 -1.4 L2.0 -1.4 L0 1.7 Z" fill="#777"/></svg>
<div class="a " style="left:813.5px;top:628.8px;width:19.5px;height:20.2px;background:#cbcbcb;border-radius:2px"></div>
<svg class="a" style="left:816.3px;top:633.3px;" width="14" height="12" viewBox="-7.0 -6.0 14 12"><rect x="-5.6" y="-4.6" width="11.2" height="9.2" fill="none" stroke="#444" stroke-width="1"/><path d="M-2.4 -4.6 V4.6 M-2.4 2 H5.6" stroke="#444" stroke-width="0.9"/></svg>
<svg class="a" style="left:839.3px;top:633.3px;" width="14" height="12" viewBox="-7.0 -6.0 14 12"><rect x="-5.6" y="-4.8" width="4.4" height="3.8" rx="0.6" fill="none" stroke="#666" stroke-width="0.9"/><rect x="1.2" y="-4.8" width="4.4" height="3.8" rx="0.6" fill="none" stroke="#666" stroke-width="0.9"/><rect x="-5.6" y="1" width="4.4" height="3.8" rx="0.6" fill="none" stroke="#666" stroke-width="0.9"/><rect x="1.2" y="1" width="4.4" height="3.8" rx="0.6" fill="none" stroke="#666" stroke-width="0.9"/></svg>
<svg class="a" style="left:862.2px;top:633.3px;" width="14" height="12" viewBox="-7.0 -6.0 14 12"><path d="M0 -3.6 Q-3 -5.4 -6 -4.4 V4 Q-3 3 0 4.8 Q3 3 6 4 V-4.4 Q3 -5.4 0 -3.6 V4.8" fill="none" stroke="#666" stroke-width="0.9"/></svg>
<svg class="a" style="left:885.5px;top:633.3px;" width="14" height="12" viewBox="-7.0 -6.0 14 12"><path d="M2 3 H-5.6 V-4.6 H4 V-3" fill="none" stroke="#666" stroke-width="0.9"/><path d="M-2 3 V5 M-4 5.2 H0" stroke="#666" stroke-width="0.9"/><circle cx="3" cy="0.6" r="3.2" fill="none" stroke="#666" stroke-width="0.9"/><circle cx="3" cy="0.6" r="1.2" fill="none" stroke="#666" stroke-width="0.8"/></svg>
<div class="a " style="left:917.5px;top:628px;width:27.5px;height:21.5px;background:#f3693f;border-radius:2.5px"></div>
<svg class="a" style="left:926.5px;top:633.0px;" width="10" height="12" viewBox="-5.0 -6.0 10 12"><path d="M-2.8 -4.2 L4 0 L-2.8 4.2 Z" fill="#fff"/></svg>
<svg class="a" style="left:947.5px;top:636.8px;" width="8" height="6" viewBox="-4.0 -3.0 8 6"><path d="M-2.0 -1.4 L2.0 -1.4 L0 1.7 Z" fill="#888"/></svg>
<div class="a t " style="left:971.5px;top:631.3px;font-size:10.3px;color:#777;font-family:'Liberation Sans',sans-serif;">68%</div>
<svg class="a" style="left:995.5px;top:636.8px;" width="8" height="6" viewBox="-4.0 -3.0 8 6"><path d="M-2.0 -1.4 L2.0 -1.4 L0 1.7 Z" fill="#888"/></svg>
<svg class="a" style="left:1011.7px;top:637.3px;" width="10" height="4" viewBox="-5.0 -2.0 10 4"><path d="M-4 0 H4" stroke="#444" stroke-width="1.2"/></svg>
<div class="a " style="left:1032.5px;top:638.9px;width:121.5px;height:0.8px;background:#8a8a8a"></div>
<div class="a " style="left:1092.2px;top:636.8px;width:0.8px;height:5.0px;background:#aaa"></div>
<svg class="a" style="left:1065.5px;top:633.3px;" width="12" height="12" viewBox="-6.0 -6.0 12 12"><circle r="4.2" fill="#f4f4f4" stroke="#555" stroke-width="1"/></svg>
<svg class="a" style="left:1163.3px;top:633.3px;" width="12" height="12" viewBox="-6.0 -6.0 12 12"><path d="M-4.4 0 H4.4 M0 -4.4 V4.4" stroke="#444" stroke-width="1.2"/></svg>
<svg class="a" style="left:1186.5px;top:633.3px;" width="12" height="12" viewBox="-6.0 -6.0 12 12"><path d="M-4.6 -2 V-4.6 H-2 M2 -4.6 H4.6 V-2 M4.6 2 V4.6 H2 M-2 4.6 H-4.6 V2" fill="none" stroke="#555" stroke-width="1"/><circle r="0.9" fill="#555"/></svg>
</div></div>
<div id="strip" class="a">
<div class="a tile act" style="top:82px;background:linear-gradient(180deg,#000 -83px,#0f1011 0px,#222325 135px,#252628 185px,#252628 505px,#1d1e20 595px,#141516 725px,#000 811px)"><div class="a tav t-blue-d">小麟</div><div class="a lab"><span class="ub ub-blue"><svg width="30" height="30" viewBox="0 0 30 30"><circle cx="15.3" cy="9.2" r="5" fill="#fff"/><path d="M4.8 25.2 C5.2 20 8.2 16.6 11.6 15.4 L15.3 18.4 L19 15.4 C22.4 16.6 25.4 20 25.8 25.2 Z" fill="#fff"/></svg></span><svg class="li" style="margin-left:4px" width="22" height="22" viewBox="0 0 22 22"><rect x="0.5" y="0" width="21" height="15.2" rx="2" fill="#eee"/><path d="M5.5 18.2 H16.5 L17.6 21 H4.4 Z" fill="#eee"/><path d="M6 12.4 C6.8 8.6 9 6.4 11.8 6 V3.6 L16.2 7.2 L11.8 10.8 V8.6 C9.4 8.8 7.6 10 6 12.4 Z" fill="#151515"/></svg><svg class="li" style="margin-left:8px;margin-right:7px" width="24" height="26" viewBox="0 0 24 26"><rect x="7.5" y="1.6" width="9" height="15.6" rx="4.5" fill="#eee"/><path d="M7.5 12.6 H16.5 V12.7 A4.5 4.5 0 0 1 7.5 12.7 Z" fill="#3fd84a"/><path d="M3.2 12.4 A8.8 8.8 0 0 0 20.8 12.4" fill="none" stroke="#fff" stroke-width="1.9"/><path d="M12 21 V23.6" stroke="#fff" stroke-width="2.2" stroke-linecap="round"/></svg><span class="ln">董小麟的屏幕...</span></div></div>
<div class="a tile" style="top:230px;background:linear-gradient(180deg,#000 -231px,#0f1011 -148px,#222325 -13px,#252628 37px,#252628 357px,#1d1e20 447px,#141516 577px,#000 663px)"><div class="a tav"><svg width="76" height="76" viewBox="0 0 100 100"><rect width="100" height="100" fill="url(#g-sky1)"/><g filter="url(#f-b1)" fill="#fff"><ellipse cx="66" cy="15" rx="10" ry="9"/><ellipse cx="75" cy="25" rx="14" ry="12"/><ellipse cx="90" cy="37" rx="14" ry="10"/><ellipse cx="62" cy="28" rx="9" ry="8"/><ellipse cx="70" cy="36" rx="14" ry="8"/><ellipse cx="14" cy="44" rx="18" ry="6"/><ellipse cx="36" cy="42" rx="14" ry="6"/><ellipse cx="56" cy="44" rx="16" ry="7"/><ellipse cx="84" cy="47" rx="20" ry="8"/></g><path d="M0 46 L26 47 L36 50 L48 48 L58 46 L70 49 L82 48 L96 42 L100 44 V75 H0 Z" fill="#dfe8f2"/><path d="M28 54 L40 60 L50 56 L58 60 L68 54 L78 56 L60 70 L44 70 Z" fill="#9db4cc" filter="url(#f-b1)"/><path d="M62 26 Q72 32 86 30 Q80 38 66 36 Z" fill="#c9d4e2" filter="url(#f-b1)"/><path d="M80 52 L96 43 L100 45 V60 Z" fill="#8aa2b8"/><path d="M0 46 L8 48 L26 58 L44 70 L30 76 L0 78 Z" fill="#3b5a2c"/><path d="M100 52 L88 60 L72 67 L56 70 L70 78 L100 80 Z" fill="#6f9d34"/><path d="M100 54 L92 59 L82 64 L100 64 Z" fill="#47702c"/><path d="M0 72 L30 69 L50 71 L70 70 L100 73 V100 H0 Z" fill="#a3c035"/><path d="M10 82 L50 75 L90 80 L80 92 L30 94 Z" fill="#bdd240" filter="url(#f-b2)"/><path d="M0 69 L14 70 L22 76 L8 79 Z M56 69 L80 70 L90 75 L60 74 Z" fill="#4e7a2c" filter="url(#f-b1)"/></svg></div><div class="a lab"><span class="ub ub-orange"><svg width="30" height="30" viewBox="0 0 30 30"><circle cx="15.3" cy="9.2" r="5" fill="#fff"/><path d="M4.8 25.2 C5.2 20 8.2 16.6 11.6 15.4 L15.3 18.4 L19 15.4 C22.4 16.6 25.4 20 25.8 25.2 Z" fill="#fff"/></svg></span><svg class="li" style="margin-left:9px;margin-right:6.5px" width="24" height="26" viewBox="0 0 24 26"><rect x="7.8" y="2" width="8.4" height="15" rx="4.2" fill="#fff"/><path d="M3.4 12.2 A8.6 8.6 0 0 0 20.6 12.2" fill="none" stroke="#fff" stroke-width="1.8"/><path d="M12 20.6 V23.4" stroke="#fff" stroke-width="2" stroke-linecap="round"/><path d="M3.4 20.6 L20.4 4.2" stroke="#111" stroke-width="4"/><path d="M3.4 20.6 L20.4 4.2" stroke="#e9525c" stroke-width="2"/></svg><span class="ln">殷毅山</span></div></div>
<div class="a tile" style="top:378px;background:linear-gradient(180deg,#000 -379px,#0f1011 -296px,#222325 -161px,#252628 -111px,#252628 209px,#1d1e20 299px,#141516 429px,#000 515px)"><div class="a tav t-blue">思敏</div><div class="a lab"><span class="ub ub-blue"><svg width="30" height="30" viewBox="0 0 30 30"><circle cx="15.3" cy="9.2" r="5" fill="#fff"/><path d="M4.8 25.2 C5.2 20 8.2 16.6 11.6 15.4 L15.3 18.4 L19 15.4 C22.4 16.6 25.4 20 25.8 25.2 Z" fill="#fff"/></svg></span><svg class="li" style="margin-left:9px;margin-right:6.5px" width="24" height="26" viewBox="0 0 24 26"><rect x="7.8" y="2" width="8.4" height="15" rx="4.2" fill="#fff"/><path d="M3.4 12.2 A8.6 8.6 0 0 0 20.6 12.2" fill="none" stroke="#fff" stroke-width="1.8"/><path d="M12 20.6 V23.4" stroke="#fff" stroke-width="2" stroke-linecap="round"/><path d="M3.4 20.6 L20.4 4.2" stroke="#111" stroke-width="4"/><path d="M3.4 20.6 L20.4 4.2" stroke="#e9525c" stroke-width="2"/></svg><span class="ln">商学院 程思敏</span></div></div>
<div class="a tile" style="top:526px;background:linear-gradient(180deg,#000 -527px,#0f1011 -444px,#222325 -309px,#252628 -259px,#252628 61px,#1d1e20 151px,#141516 281px,#000 367px)"><div class="a tav"><svg width="76" height="76" viewBox="0 0 100 100"><rect width="100" height="100" fill="url(#g-sky2)"/><g filter="url(#f-b2)" fill="#e9eef6"><ellipse cx="60" cy="58" rx="14" ry="9"/><ellipse cx="92" cy="48" rx="12" ry="9"/><ellipse cx="8" cy="58" rx="8" ry="5"/><ellipse cx="30" cy="66" rx="20" ry="8"/></g><path d="M68 76 L72 56 Q76 50 82 51 L92 54 L100 58 V80 Z" fill="#8c7f88"/><path d="M84 56 L96 60 L98 74 L88 72 Z" fill="#b09a92" filter="url(#f-b1)"/><path d="M36 74 L40 70 L46 69 L49 66 L53 66 L54 63 L64 64 L68 70 L76 76 Z" fill="#7d7682"/><path d="M0 64 L6 63 L14 68 L20 74 L0 80 Z" fill="#6f6a7a"/><path d="M0 78 Q20 70 40 72 T80 72 L100 74 V100 H0 Z" fill="#4c7a3c"/><path d="M20 86 Q50 78 80 84 L70 100 H30 Z" fill="#5e9444" filter="url(#f-b2)"/></svg></div><div class="a lab"><span class="ub ub-blue"><svg width="30" height="30" viewBox="0 0 30 30"><circle cx="15.3" cy="9.2" r="5" fill="#fff"/><path d="M4.8 25.2 C5.2 20 8.2 16.6 11.6 15.4 L15.3 18.4 L19 15.4 C22.4 16.6 25.4 20 25.8 25.2 Z" fill="#fff"/></svg></span><svg class="li" style="margin-left:9px;margin-right:6.5px" width="24" height="26" viewBox="0 0 24 26"><rect x="7.8" y="2" width="8.4" height="15" rx="4.2" fill="#fff"/><path d="M3.4 12.2 A8.6 8.6 0 0 0 20.6 12.2" fill="none" stroke="#fff" stroke-width="1.8"/><path d="M12 20.6 V23.4" stroke="#fff" stroke-width="2" stroke-linecap="round"/><path d="M3.4 20.6 L20.4 4.2" stroke="#111" stroke-width="4"/><path d="M3.4 20.6 L20.4 4.2" stroke="#e9525c" stroke-width="2"/></svg><span class="ln">魏传文</span></div></div>
<div class="a tile" style="top:674px;background:linear-gradient(180deg,#000 -675px,#0f1011 -592px,#222325 -457px,#252628 -407px,#252628 -87px,#1d1e20 3px,#141516 133px,#000 219px)"><div class="a tav t-blue-m">阳林</div><div class="a lab dim"><svg class="li" style="margin-left:5px;margin-right:6.5px" width="24" height="26" viewBox="0 0 24 26"><rect x="7.8" y="2" width="8.4" height="15" rx="4.2" fill="#fff"/><path d="M3.4 12.2 A8.6 8.6 0 0 0 20.6 12.2" fill="none" stroke="#fff" stroke-width="1.8"/><path d="M12 20.6 V23.4" stroke="#fff" stroke-width="2" stroke-linecap="round"/><path d="M3.4 20.6 L20.4 4.2" stroke="#111" stroke-width="4"/><path d="M3.4 20.6 L20.4 4.2" stroke="#e9525c" stroke-width="2"/></svg><span class="ln">阳林</span></div></div>
</div>
<div id="panel" class="a">
<div class="a" id="pborder"></div>
<div class="a" id="phead"><svg class="a" style="left:0;top:0" width="40" height="45"><path d="M17.5 20.3 L22.3 25.1 L27.1 20.3" fill="none" stroke="#8c8c8c" stroke-width="1.5"/></svg><div class="a" id="ptitle">成员(86人)</div></div>
<div class="a" id="psearch"><svg class="a" style="left:11px;top:12px" width="20" height="20" viewBox="0 0 20 20"><circle cx="7.6" cy="7.6" r="5.6" fill="none" stroke="#c6c6c6" stroke-width="2"/><path d="M12 12 L17.4 17.4" stroke="#c6c6c6" stroke-width="2.6" stroke-linecap="round"/></svg><span class="a" id="psph">搜索成员</span></div>
<div class="a" id="plist">
<div class="a row" style="top:8px"><div class="a av av-land"><svg width="44" height="44" viewBox="0 0 100 100"><rect width="100" height="100" fill="url(#g-sky1)"/><g filter="url(#f-b1)" fill="#fff"><ellipse cx="66" cy="15" rx="10" ry="9"/><ellipse cx="75" cy="25" rx="14" ry="12"/><ellipse cx="90" cy="37" rx="14" ry="10"/><ellipse cx="62" cy="28" rx="9" ry="8"/><ellipse cx="70" cy="36" rx="14" ry="8"/><ellipse cx="14" cy="44" rx="18" ry="6"/><ellipse cx="36" cy="42" rx="14" ry="6"/><ellipse cx="56" cy="44" rx="16" ry="7"/><ellipse cx="84" cy="47" rx="20" ry="8"/></g><path d="M0 46 L26 47 L36 50 L48 48 L58 46 L70 49 L82 48 L96 42 L100 44 V75 H0 Z" fill="#dfe8f2"/><path d="M28 54 L40 60 L50 56 L58 60 L68 54 L78 56 L60 70 L44 70 Z" fill="#9db4cc" filter="url(#f-b1)"/><path d="M62 26 Q72 32 86 30 Q80 38 66 36 Z" fill="#c9d4e2" filter="url(#f-b1)"/><path d="M80 52 L96 43 L100 45 V60 Z" fill="#8aa2b8"/><path d="M0 46 L8 48 L26 58 L44 70 L30 76 L0 78 Z" fill="#3b5a2c"/><path d="M100 52 L88 60 L72 67 L56 70 L70 78 L100 80 Z" fill="#6f9d34"/><path d="M100 54 L92 59 L82 64 L100 64 Z" fill="#47702c"/><path d="M0 72 L30 69 L50 71 L70 70 L100 73 V100 H0 Z" fill="#a3c035"/><path d="M10 82 L50 75 L90 80 L80 92 L30 94 Z" fill="#bdd240" filter="url(#f-b2)"/><path d="M0 69 L14 70 L22 76 L8 79 Z M56 69 L80 70 L90 75 L60 74 Z" fill="#4e7a2c" filter="url(#f-b1)"/></svg></div><div class="a nm">殷毅山<span class="rl">(主持人, 我)</span></div><svg class="a ic" style="left:380px;top:17px" width="32" height="32" viewBox="0 0 32 32"><rect x="10.2" y="1" width="11.4" height="20.6" rx="5.7" fill="#9a9aa2"/><path d="M6.6 16.4 A9.4 9.4 0 0 0 25.4 16.4" fill="none" stroke="#9a9aa2" stroke-width="1.8"/><path d="M16 25.8 V30 M9.3 30 H22.9" fill="none" stroke="#9a9aa2" stroke-width="1.7"/><path d="M4.2 27.6 L26.2 6" stroke="#fff" stroke-width="4.2"/><path d="M4.6 27.4 L26.4 6" stroke="#f25a55" stroke-width="1.7"/></svg><svg class="a ic" style="left:416px;top:17px" width="36" height="32" viewBox="0 0 36 32"><rect x="4" y="7" width="19.6" height="17.8" rx="2.2" fill="#9a9aa2"/><path d="M25.4 13.2 L32.2 7.4 Q34 6.4 34 8.6 V23.2 Q34 25.4 32.2 24.4 L25.4 18.8 Z" fill="#9a9aa2"/><path d="M3.8 27.7 L25.8 6.2" stroke="#fff" stroke-width="4.2"/><path d="M4.2 27.5 L26.2 6" stroke="#f25a55" stroke-width="1.7"/></svg></div>
<div class="a row" style="top:74px"><div class="a av av-blue">小麟</div><div class="a nm">董小麟<span class="rl">(联席主持人)</span></div><svg class="a ic" style="left:342px;top:18px" width="32" height="32" viewBox="0 0 32 32"><rect x="0" y="0" width="30" height="21" rx="3" fill="#9a9aa2"/><path d="M5.5 26 H24.5 L25.8 30 H4.2 Z" fill="#9a9aa2" stroke="#9a9aa2" stroke-width="0.6" stroke-linejoin="round"/><path d="M8.3 17.2 C9.2 11.8 12.6 8.6 16.6 8.2 V5 L22.6 9.8 L16.6 14.6 V11.4 C13.2 11.6 10.4 13.4 8.3 17.2 Z" fill="#fff"/></svg><svg class="a ic" style="left:380px;top:17px" width="32" height="32" viewBox="0 0 32 32"><rect x="10.2" y="1" width="11.4" height="20.6" rx="5.7" fill="#9a9aa2"/><path d="M10.2 14.6 H21.6 V15.9 A5.7 5.7 0 0 1 10.2 15.9 Z" fill="#3fe046"/><path d="M6.6 16.4 A9.4 9.4 0 0 0 25.4 16.4" fill="none" stroke="#9a9aa2" stroke-width="1.8"/><path d="M16 25.8 V30 M9.3 30 H22.9" fill="none" stroke="#9a9aa2" stroke-width="1.7"/></svg><svg class="a ic" style="left:416px;top:17px" width="36" height="32" viewBox="0 0 36 32"><rect x="4" y="7" width="19.6" height="17.8" rx="2.2" fill="#9a9aa2"/><path d="M25.4 13.2 L32.2 7.4 Q34 6.4 34 8.6 V23.2 Q34 25.4 32.2 24.4 L25.4 18.8 Z" fill="#9a9aa2"/><path d="M3.8 27.7 L25.8 6.2" stroke="#fff" stroke-width="4.2"/><path d="M4.2 27.5 L26.2 6" stroke="#f25a55" stroke-width="1.7"/></svg></div>
<div class="a row" style="top:140px"><div class="a av av-blue">思敏</div><div class="a nm">商学院 程思敏<span class="rl">(联席主持人)</span></div><svg class="a ic" style="left:380px;top:17px" width="32" height="32" viewBox="0 0 32 32"><rect x="10.2" y="1" width="11.4" height="20.6" rx="5.7" fill="#9a9aa2"/><path d="M6.6 16.4 A9.4 9.4 0 0 0 25.4 16.4" fill="none" stroke="#9a9aa2" stroke-width="1.8"/><path d="M16 25.8 V30 M9.3 30 H22.9" fill="none" stroke="#9a9aa2" stroke-width="1.7"/><path d="M4.2 27.6 L26.2 6" stroke="#fff" stroke-width="4.2"/><path d="M4.6 27.4 L26.4 6" stroke="#f25a55" stroke-width="1.7"/></svg><svg class="a ic" style="left:416px;top:17px" width="36" height="32" viewBox="0 0 36 32"><rect x="4" y="7" width="19.6" height="17.8" rx="2.2" fill="#9a9aa2"/><path d="M25.4 13.2 L32.2 7.4 Q34 6.4 34 8.6 V23.2 Q34 25.4 32.2 24.4 L25.4 18.8 Z" fill="#9a9aa2"/><path d="M3.8 27.7 L25.8 6.2" stroke="#fff" stroke-width="4.2"/><path d="M4.2 27.5 L26.2 6" stroke="#f25a55" stroke-width="1.7"/></svg></div>
<div class="a row" style="top:206px"><div class="a av av-mtn"><svg width="44" height="44" viewBox="0 0 100 100"><rect width="100" height="100" fill="url(#g-sky2)"/><g filter="url(#f-b2)" fill="#e9eef6"><ellipse cx="60" cy="58" rx="14" ry="9"/><ellipse cx="92" cy="48" rx="12" ry="9"/><ellipse cx="8" cy="58" rx="8" ry="5"/><ellipse cx="30" cy="66" rx="20" ry="8"/></g><path d="M68 76 L72 56 Q76 50 82 51 L92 54 L100 58 V80 Z" fill="#8c7f88"/><path d="M84 56 L96 60 L98 74 L88 72 Z" fill="#b09a92" filter="url(#f-b1)"/><path d="M36 74 L40 70 L46 69 L49 66 L53 66 L54 63 L64 64 L68 70 L76 76 Z" fill="#7d7682"/><path d="M0 64 L6 63 L14 68 L20 74 L0 80 Z" fill="#6f6a7a"/><path d="M0 78 Q20 70 40 72 T80 72 L100 74 V100 H0 Z" fill="#4c7a3c"/><path d="M20 86 Q50 78 80 84 L70 100 H30 Z" fill="#5e9444" filter="url(#f-b2)"/></svg></div><div class="a nm">魏传文<span class="rl">(联席主持人)</span></div><svg class="a ic" style="left:418px;top:17px" width="32" height="32" viewBox="0 0 32 32"><rect x="10.2" y="1" width="11.4" height="20.6" rx="5.7" fill="#9a9aa2"/><path d="M6.6 16.4 A9.4 9.4 0 0 0 25.4 16.4" fill="none" stroke="#9a9aa2" stroke-width="1.8"/><path d="M16 25.8 V30 M9.3 30 H22.9" fill="none" stroke="#9a9aa2" stroke-width="1.7"/><path d="M4.2 27.6 L26.2 6" stroke="#fff" stroke-width="4.2"/><path d="M4.6 27.4 L26.4 6" stroke="#f25a55" stroke-width="1.7"/></svg></div>
<div class="a row" style="top:272px"><div class="a av av-pine"><svg width="44" height="44" viewBox="0 0 100 100"><rect width="100" height="100" fill="url(#g-sky3)"/><g filter="url(#f-b1)" fill="#fff"><ellipse cx="30" cy="32" rx="18" ry="7"/><ellipse cx="56" cy="28" rx="16" ry="8"/><ellipse cx="78" cy="34" rx="14" ry="6"/><ellipse cx="12" cy="40" rx="10" ry="5"/></g><path d="M0 46 L6 38 L10 46 L16 36 L22 48 L28 38 L34 50 L40 40 L46 52 L52 42 L58 54 L64 44 L70 56 L78 44 L84 56 L90 40 L96 52 L100 44 V80 H0 Z" fill="#264a2c"/><path d="M0 60 L30 62 L60 72 L100 78 V100 H0 Z" fill="#5b8a2e"/><path d="M0 70 L40 72 L100 88 V100 H0 Z" fill="#4e7a2a"/></svg></div><div class="a nm">&nbsp;&nbsp;罗纪宁<span class="rl"></span></div><svg class="a ic" style="left:380px;top:17px" width="32" height="32" viewBox="0 0 32 32"><rect x="10.2" y="1" width="11.4" height="20.6" rx="5.7" fill="#9a9aa2"/><path d="M6.6 16.4 A9.4 9.4 0 0 0 25.4 16.4" fill="none" stroke="#9a9aa2" stroke-width="1.8"/><path d="M16 25.8 V30 M9.3 30 H22.9" fill="none" stroke="#9a9aa2" stroke-width="1.7"/><path d="M4.2 27.6 L26.2 6" stroke="#fff" stroke-width="4.2"/><path d="M4.6 27.4 L26.4 6" stroke="#f25a55" stroke-width="1.7"/></svg><svg class="a ic" style="left:416px;top:17px" width="36" height="32" viewBox="0 0 36 32"><rect x="4" y="7" width="19.6" height="17.8" rx="2.2" fill="#9a9aa2"/><path d="M25.4 13.2 L32.2 7.4 Q34 6.4 34 8.6 V23.2 Q34 25.4 32.2 24.4 L25.4 18.8 Z" fill="#9a9aa2"/><path d="M3.8 27.7 L25.8 6.2" stroke="#fff" stroke-width="4.2"/><path d="M4.2 27.5 L26.2 6" stroke="#f25a55" stroke-width="1.7"/></svg></div>
<div class="a row" style="top:338px"><div class="a av av-blue">99</div><div class="a nm"><span style="letter-spacing:.8px">137****9699</span><span class="rl"></span></div><svg class="a ic" style="left:380px;top:17px" width="32" height="32" viewBox="0 0 32 32"><rect x="10.2" y="1" width="11.4" height="20.6" rx="5.7" fill="#9a9aa2"/><path d="M6.6 16.4 A9.4 9.4 0 0 0 25.4 16.4" fill="none" stroke="#9a9aa2" stroke-width="1.8"/><path d="M16 25.8 V30 M9.3 30 H22.9" fill="none" stroke="#9a9aa2" stroke-width="1.7"/><path d="M4.2 27.6 L26.2 6" stroke="#fff" stroke-width="4.2"/><path d="M4.6 27.4 L26.4 6" stroke="#f25a55" stroke-width="1.7"/></svg><svg class="a ic" style="left:416px;top:17px" width="36" height="32" viewBox="0 0 36 32"><rect x="4" y="7" width="19.6" height="17.8" rx="2.2" fill="#9a9aa2"/><path d="M25.4 13.2 L32.2 7.4 Q34 6.4 34 8.6 V23.2 Q34 25.4 32.2 24.4 L25.4 18.8 Z" fill="#9a9aa2"/><path d="M3.8 27.7 L25.8 6.2" stroke="#fff" stroke-width="4.2"/><path d="M4.2 27.5 L26.2 6" stroke="#f25a55" stroke-width="1.7"/></svg></div>
<div class="a row" style="top:404px"><div class="a av av-sand"><svg width="44" height="44" viewBox="0 0 100 100"><rect width="100" height="100" fill="#d9a254"/><path d="M0 0 H60 L40 22 L0 50 Z" fill="#96785c"/><path d="M0 40 L44 10 L56 6 Q46 40 30 70 L10 100 H0 Z" fill="#b98746"/><path d="M56 6 L100 30 V100 H40 Q52 50 56 6 Z" fill="#dca65a"/><path d="M60 30 Q80 40 100 44 V60 Q76 54 56 46 Z" fill="#e6b468" filter="url(#f-b2)"/><path d="M20 100 L40 78 L64 100 Z" fill="#a97a42"/><g fill="#6a4522"><ellipse cx="57" cy="9" rx="1.4" ry="2.6"/><ellipse cx="40" cy="26" rx="2" ry="1.6"/><ellipse cx="37" cy="34" rx="2.4" ry="1.8"/><ellipse cx="42" cy="40" rx="2.4" ry="1.8"/><ellipse cx="33" cy="46" rx="3" ry="2.2"/><ellipse cx="41" cy="53" rx="3" ry="2.2"/><ellipse cx="28" cy="58" rx="3.4" ry="2.6"/><ellipse cx="38" cy="64" rx="3.6" ry="2.6"/><ellipse cx="24" cy="70" rx="4" ry="3"/><ellipse cx="36" cy="76" rx="4" ry="3"/><ellipse cx="20" cy="82" rx="4.6" ry="3.2"/><ellipse cx="46" cy="82" rx="3.6" ry="2.6"/></g></svg></div><div class="a sig"><i style="height:5px;background:#f0545a"></i><i style="height:7px"></i><i style="height:8.8px"></i></div><div class="a nm">Jerry<span class="rl"></span></div><svg class="a ic" style="left:380px;top:17px" width="32" height="32" viewBox="0 0 32 32"><rect x="10.2" y="1" width="11.4" height="20.6" rx="5.7" fill="#9a9aa2"/><path d="M6.6 16.4 A9.4 9.4 0 0 0 25.4 16.4" fill="none" stroke="#9a9aa2" stroke-width="1.8"/><path d="M16 25.8 V30 M9.3 30 H22.9" fill="none" stroke="#9a9aa2" stroke-width="1.7"/><path d="M4.2 27.6 L26.2 6" stroke="#fff" stroke-width="4.2"/><path d="M4.6 27.4 L26.4 6" stroke="#f25a55" stroke-width="1.7"/></svg><svg class="a ic" style="left:416px;top:17px" width="36" height="32" viewBox="0 0 36 32"><rect x="4" y="7" width="19.6" height="17.8" rx="2.2" fill="#9a9aa2"/><path d="M25.4 13.2 L32.2 7.4 Q34 6.4 34 8.6 V23.2 Q34 25.4 32.2 24.4 L25.4 18.8 Z" fill="#9a9aa2"/><path d="M3.8 27.7 L25.8 6.2" stroke="#fff" stroke-width="4.2"/><path d="M4.2 27.5 L26.2 6" stroke="#f25a55" stroke-width="1.7"/></svg></div>
<div class="a row" style="top:470px"><div class="a av av-girl"><svg width="44" height="44" viewBox="0 0 100 100"><rect width="100" height="100" fill="#f3ecea"/><path d="M0 0 H62 L60 30 L52 56 L30 64 L8 56 L0 44 Z" fill="#2e201e"/><path d="M28 40 Q40 20 56 28 Q62 44 54 60 Q44 70 34 62 Q26 54 28 40 Z" fill="#e6bca8"/><path d="M10 20 Q34 0 58 14 L56 30 Q42 20 30 34 L14 54 L2 40 Z" fill="#2a1c1a"/><path d="M60 6 L74 8 L78 70 L64 78 L58 50 Z" fill="#3a2c2a"/><path d="M0 72 Q26 58 48 76 L58 100 H0 Z" fill="#ea93a6"/><path d="M34 60 L52 56 L58 84 L42 86 Z" fill="#e9c6b4"/><path d="M72 56 L100 52 V100 H62 Z" fill="#f6f2f0"/><ellipse cx="82" cy="30" rx="11" ry="12" fill="#d9142c"/><ellipse cx="80" cy="26" rx="5" ry="5" fill="#b30f22"/><path d="M82 42 L84 42 L83 92 L81 92 Z" fill="#3c7a2c"/></svg></div><div class="a nm">Sissie<span class="rl"></span></div><svg class="a ic" style="left:380px;top:17px" width="32" height="32" viewBox="0 0 32 32"><rect x="10.2" y="1" width="11.4" height="20.6" rx="5.7" fill="#9a9aa2"/><path d="M6.6 16.4 A9.4 9.4 0 0 0 25.4 16.4" fill="none" stroke="#9a9aa2" stroke-width="1.8"/><path d="M16 25.8 V30 M9.3 30 H22.9" fill="none" stroke="#9a9aa2" stroke-width="1.7"/><path d="M4.2 27.6 L26.2 6" stroke="#fff" stroke-width="4.2"/><path d="M4.6 27.4 L26.4 6" stroke="#f25a55" stroke-width="1.7"/></svg><svg class="a ic" style="left:416px;top:17px" width="36" height="32" viewBox="0 0 36 32"><rect x="4" y="7" width="19.6" height="17.8" rx="2.2" fill="#9a9aa2"/><path d="M25.4 13.2 L32.2 7.4 Q34 6.4 34 8.6 V23.2 Q34 25.4 32.2 24.4 L25.4 18.8 Z" fill="#9a9aa2"/><path d="M3.8 27.7 L25.8 6.2" stroke="#fff" stroke-width="4.2"/><path d="M4.2 27.5 L26.2 6" stroke="#f25a55" stroke-width="1.7"/></svg></div>
<div class="a row" style="top:536px"><div class="a av av-yue"><svg width="44" height="44" viewBox="0 0 100 100"><rect width="100" height="100" fill="#e4e8ee"/><rect x="56" y="30" width="44" height="42" fill="#b58f82"/><rect x="84" y="34" width="16" height="30" fill="#8e8a90"/><rect x="0" y="60" width="100" height="10" fill="#7a9a5a"/><rect x="0" y="68" width="100" height="32" fill="#d8d6d2"/><ellipse cx="46" cy="22" rx="13" ry="5" fill="#4a3a34"/><circle cx="46" cy="27" r="7" fill="#e8c8b4"/><path d="M30 36 L20 24 L24 22 L36 32 L56 34 L66 60 L60 62 L58 70 H36 Z" fill="#fbfbfb"/><path d="M36 70 H58 L58 100 H38 Z" fill="#8fb0d2"/></svg></div><div class="a nm"><span style="letter-spacing:.6px">YueZhang</span><span class="rl"></span></div><svg class="a ic" style="left:380px;top:17px" width="32" height="32" viewBox="0 0 32 32"><rect x="10.2" y="1" width="11.4" height="20.6" rx="5.7" fill="#9a9aa2"/><path d="M6.6 16.4 A9.4 9.4 0 0 0 25.4 16.4" fill="none" stroke="#9a9aa2" stroke-width="1.8"/><path d="M16 25.8 V30 M9.3 30 H22.9" fill="none" stroke="#9a9aa2" stroke-width="1.7"/><path d="M4.2 27.6 L26.2 6" stroke="#fff" stroke-width="4.2"/><path d="M4.6 27.4 L26.4 6" stroke="#f25a55" stroke-width="1.7"/></svg><svg class="a ic" style="left:416px;top:17px" width="36" height="32" viewBox="0 0 36 32"><rect x="4" y="7" width="19.6" height="17.8" rx="2.2" fill="#9a9aa2"/><path d="M25.4 13.2 L32.2 7.4 Q34 6.4 34 8.6 V23.2 Q34 25.4 32.2 24.4 L25.4 18.8 Z" fill="#9a9aa2"/><path d="M3.8 27.7 L25.8 6.2" stroke="#fff" stroke-width="4.2"/><path d="M4.2 27.5 L26.2 6" stroke="#f25a55" stroke-width="1.7"/></svg></div>
<div class="a row" style="top:602px"><div class="a av av-sky"><svg width="44" height="44" viewBox="0 0 100 100"><rect width="100" height="100" fill="url(#g-night)"/><path d="M64 12 Q52 22 42 32 Q36 40 46 46 Q62 54 62 62 Q58 72 40 80" fill="none" stroke="#fff" stroke-width="6" stroke-linecap="round" filter="url(#f-b2)" opacity="0.95"/><path d="M0 86 L14 82 L20 74 L24 84 L40 86 L60 84 L72 76 L78 84 L100 80 V100 H0 Z" fill="#3d4f74" filter="url(#f-b1)"/><path d="M0 94 H100 V100 H0 Z" fill="#2a3858"/></svg></div><div class="a nm"><span style="letter-spacing:.8px">zhenhongchen</span><span class="rl"></span></div><svg class="a ic" style="left:380px;top:17px" width="32" height="32" viewBox="0 0 32 32"><rect x="10.2" y="1" width="11.4" height="20.6" rx="5.7" fill="#9a9aa2"/><path d="M6.6 16.4 A9.4 9.4 0 0 0 25.4 16.4" fill="none" stroke="#9a9aa2" stroke-width="1.8"/><path d="M16 25.8 V30 M9.3 30 H22.9" fill="none" stroke="#9a9aa2" stroke-width="1.7"/><path d="M4.2 27.6 L26.2 6" stroke="#fff" stroke-width="4.2"/><path d="M4.6 27.4 L26.4 6" stroke="#f25a55" stroke-width="1.7"/></svg><svg class="a ic" style="left:416px;top:17px" width="36" height="32" viewBox="0 0 36 32"><rect x="4" y="7" width="19.6" height="17.8" rx="2.2" fill="#9a9aa2"/><path d="M25.4 13.2 L32.2 7.4 Q34 6.4 34 8.6 V23.2 Q34 25.4 32.2 24.4 L25.4 18.8 Z" fill="#9a9aa2"/><path d="M3.8 27.7 L25.8 6.2" stroke="#fff" stroke-width="4.2"/><path d="M4.2 27.5 L26.2 6" stroke="#f25a55" stroke-width="1.7"/></svg></div>
<div class="a row" style="top:668px"><div class="a av av-blue"></div><svg class="a ic" style="left:380px;top:17px" width="32" height="32" viewBox="0 0 32 32"><rect x="10.2" y="1" width="11.4" height="20.6" rx="5.7" fill="#9a9aa2"/><path d="M6.6 16.4 A9.4 9.4 0 0 0 25.4 16.4" fill="none" stroke="#9a9aa2" stroke-width="1.8"/><path d="M16 25.8 V30 M9.3 30 H22.9" fill="none" stroke="#9a9aa2" stroke-width="1.7"/><path d="M4.2 27.6 L26.2 6" stroke="#fff" stroke-width="4.2"/><path d="M4.6 27.4 L26.4 6" stroke="#f25a55" stroke-width="1.7"/></svg><svg class="a ic" style="left:416px;top:17px" width="36" height="32" viewBox="0 0 36 32"><rect x="4" y="7" width="19.6" height="17.8" rx="2.2" fill="#9a9aa2"/><path d="M25.4 13.2 L32.2 7.4 Q34 6.4 34 8.6 V23.2 Q34 25.4 32.2 24.4 L25.4 18.8 Z" fill="#9a9aa2"/><path d="M3.8 27.7 L25.8 6.2" stroke="#fff" stroke-width="4.2"/><path d="M4.2 27.5 L26.2 6" stroke="#f25a55" stroke-width="1.7"/></svg></div>
</div>
<div class="a" id="pfoot"><div class="a btn b1">全体静音</div><div class="a btn b2">解除全体静音</div><div class="a btn b3">更多<span class="tri"></span></div></div>
</div>
<div id="bottomline" class="a"></div>
<div id="bottomblue" class="a"></div>
<div id="bl2" class="a"></div>
</body>
</html>
